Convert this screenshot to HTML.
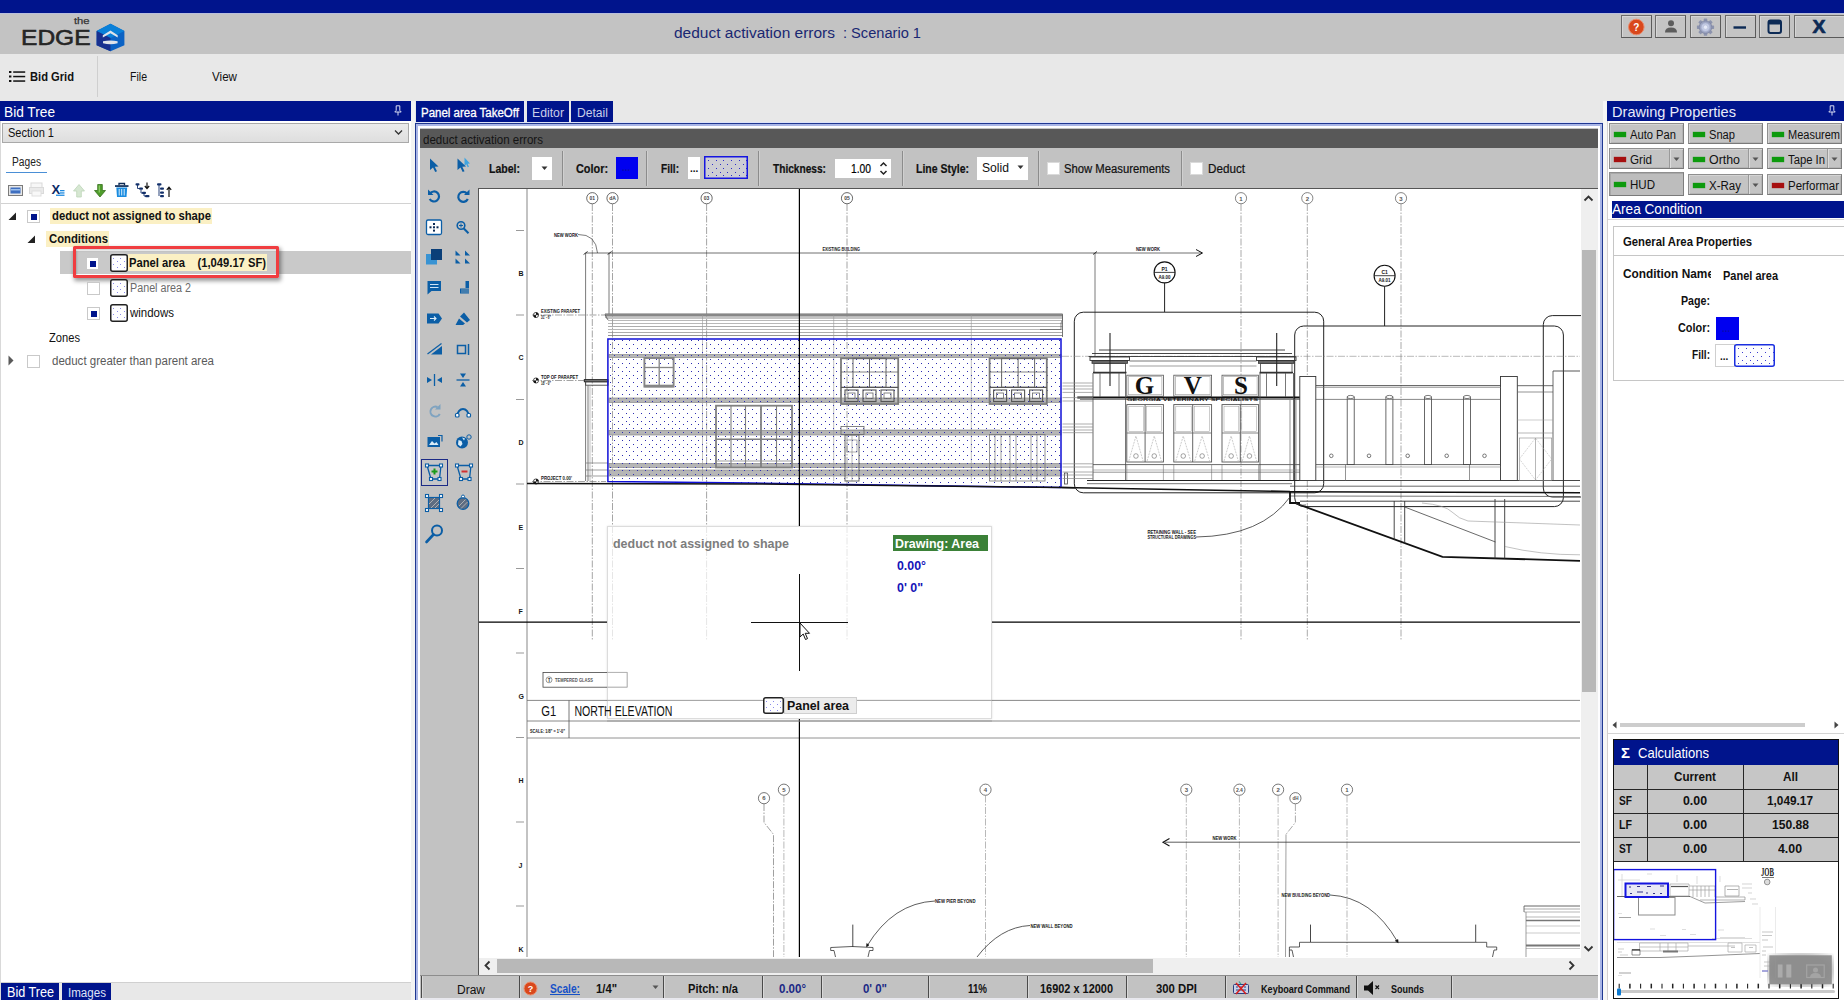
<!DOCTYPE html>
<html>
<head>
<meta charset="utf-8">
<title>deduct activation errors : Scenario 1</title>
<style>
*{box-sizing:border-box;margin:0;padding:0}
html,body{width:1844px;height:1000px;overflow:hidden;background:#e8e8e8;font-family:"Liberation Sans",sans-serif;font-size:12px;color:#111}
.a{position:absolute}
.t{position:absolute;white-space:nowrap;line-height:1}
.b{font-weight:bold}
.navy{background:#00148c}

.wb{top:15px;width:31px;height:23px;border:1px solid #6b6b6b;border-right-color:#5a5a5a;border-bottom-color:#5a5a5a;background:#c4c4c4;box-shadow:inset 1px 1px 0 #d6d6d6}

.cb{width:13px;height:13px;border:1px solid #c9c9c9;background:#fff}
.cb i{position:absolute;left:3px;top:3px;width:6px;height:6px;background:#00148c}
.hl{background:#fbf0c4}
.fi{width:18px;height:18px;border:1.5px solid #222;border-radius:2px;background-color:#fdfdff;background-image:radial-gradient(circle,#8585ee 0.45px,transparent 0.7px),radial-gradient(circle,#8585ee 0.45px,transparent 0.7px);background-size:6px 6px;background-position:0px 0px,3px 3px}

.tl{font-size:12px;color:#111;-webkit-text-stroke:0.2px #111}
.sep{top:151px;width:2px;height:35px;background:#8c8c8c;border-right:1px solid #d0d0d0}
.sd{top:976px;width:1px;height:22px;background:#4a4a4a;box-shadow:1px 0 0 #d8d8d8}
.st{top:983.4px;font-size:12px;color:#111}

.pb{border:1px solid #8f8f8f;border-right-color:#7e7e7e;border-bottom-color:#7a7a7a;background:#c4c4c4;box-shadow:inset 1px 1px 0 #d4d4d4, inset -1px -1px 0 #b4b4b4}
.pp{background:#bdbdbd;box-shadow:inset 1px 1px 0 #a8a8a8}
.gl{background:#262626}
</style>
</head>
<body>
<div id="root" style="position:relative;width:1844px;height:1000px;overflow:hidden;background:#e8e8e8">
<!-- ===== TOP BARS ===== -->
<div class="a navy" style="left:0;top:0;width:1844px;height:13px"></div>
<div class="a" style="left:0;top:13px;width:1844px;height:1px;background:#b9bfdc"></div>
<div class="a" style="left:0;top:14px;width:1844px;height:40px;background:#c3c3c3"></div>
<div class="a" style="left:0;top:54px;width:1844px;height:47px;background:#e8e8e8"></div>

<!-- logo -->
<div class="t" style="transform-origin:0 0;transform:scaleX(1.1957);left:74.2px;top:16.2px;font-size:9.4px;color:#333;-webkit-text-stroke:0.25px #333">the</div>
<div class="t" style="transform-origin:0 0;transform:scaleX(1.1012);left:21px;top:26.8px;font-size:22.3px;color:#262626;-webkit-text-stroke:0.6px #262626">EDGE</div>
<svg class="a" style="left:95px;top:22px" width="31" height="31" viewBox="95 22 31 31">
  <polygon points="110.5,23.8 124.4,30.9 124.4,45.2 110.5,51.2 96.6,45.2 96.6,30.9" fill="#0b62c4"/>
  <polygon points="110.5,23.8 124.4,30.9 110.5,38 96.6,30.9" fill="#0a80d8"/>
  <polygon points="96.6,30.9 110.5,38 110.5,51.2 96.6,45.2" fill="#18308f"/>
  <path d="M102.8 35.3L110.5 30.6 117.7 35.3 117.7 37.6 110.5 33.300 102.800 37.600Z" fill="#dfe3ea"/>
  <path d="M103 41.2Q110.500 39.800 117.600 41.200L117.600 43.300Q110.500 45.200 103 43.300Z" fill="#dfe3ea"/>
  <path d="M104.500 36.800L110.500 38.200V33.400Z" fill="#18308f" opacity=".0"/>
</svg>
<!-- title -->
<div class="t" style="transform-origin:0 0;transform:scaleX(0.9993);left:673.500px;top:25px;font-size:15.5px;color:#1a2872;">deduct activation errors</div><div class="t" style="transform-origin:0 0;transform:scaleX(0.9430);left:842.500px;top:25px;font-size:15.5px;color:#1a2872;">: Scenario 1</div>
<!-- window buttons -->
<div class="a wb" style="left:1621px"></div>
<div class="a wb" style="left:1655px"></div>
<div class="a wb" style="left:1690px"></div>
<div class="a wb" style="left:1725px"></div>
<div class="a wb" style="left:1759px"></div>
<div class="a wb" style="left:1794px;width:52px"></div>
<svg class="a" style="left:1621px;top:15px" width="223" height="24" viewBox="1621 15 223 24">
  <circle cx="1636.3" cy="27" r="7.8" fill="#d9481c"/>
  <circle cx="1636.3" cy="27" r="7.8" fill="none" stroke="#e9896a" stroke-width="1"/>
  <text x="1636.3" y="30.8" font-size="10" font-weight="bold" fill="#fff" text-anchor="middle" font-family="Liberation Sans">?</text>
  <circle cx="1671" cy="23.3" r="3" fill="#5c5c5c"/>
  <path d="M1665 32.5 Q1665 27.5 1671 27.5 Q1677 27.5 1677 32.5 Z" fill="#5c5c5c"/>
  <g transform="translate(1705.5,27.2)"><rect x="-1.700" y="-8.600" width="3.400" height="3.600" rx=".6" transform="rotate(0)" fill="#8c93ad"/><rect x="-1.700" y="-8.600" width="3.400" height="3.600" rx=".6" transform="rotate(45)" fill="#8c93ad"/><rect x="-1.700" y="-8.600" width="3.400" height="3.600" rx=".6" transform="rotate(90)" fill="#8c93ad"/><rect x="-1.700" y="-8.600" width="3.400" height="3.600" rx=".6" transform="rotate(135)" fill="#8c93ad"/><rect x="-1.700" y="-8.600" width="3.400" height="3.600" rx=".6" transform="rotate(180)" fill="#8c93ad"/><rect x="-1.700" y="-8.600" width="3.400" height="3.600" rx=".6" transform="rotate(225)" fill="#8c93ad"/><rect x="-1.700" y="-8.600" width="3.400" height="3.600" rx=".6" transform="rotate(270)" fill="#8c93ad"/><rect x="-1.700" y="-8.600" width="3.400" height="3.600" rx=".6" transform="rotate(315)" fill="#8c93ad"/><circle r="6.300" fill="#9aa2bf" stroke="#7f87a3" stroke-width=".8"/><circle r="4.300" fill="#c3cae3" stroke="#aab2d0" stroke-width=".8"/><circle r="2.200" fill="#e6eaf8" stroke="#b6bdd8" stroke-width=".6"/></g>
  <rect x="1733.5" y="26.3" width="12.5" height="2.4" fill="#0c2a55"/>
  <rect x="1768.5" y="20.5" width="12.5" height="12.5" rx="2" fill="none" stroke="#0c2a55" stroke-width="2"/>
  <rect x="1768.5" y="20.5" width="12.5" height="4" rx="1.5" fill="#0c2a55"/>
  <text x="1819" y="33.2" font-size="18" font-weight="bold" fill="#0c2a55" stroke="#0c2a55" stroke-width=".7" textLength="13" lengthAdjust="spacingAndGlyphs" text-anchor="middle" font-family="Liberation Sans">X</text>
</svg>
<!-- menu -->
<svg class="a" style="left:9px;top:70px" width="17" height="13" viewBox="0 0 17 13">
  <g fill="#111"><rect x="0" y="1" width="2.4" height="2"/><rect x="0" y="5.5" width="2.4" height="2"/><rect x="0" y="10" width="2.4" height="2"/>
  <rect x="4.2" y="1.3" width="12" height="1.5"/><rect x="4.2" y="5.8" width="12" height="1.5"/><rect x="4.2" y="10.3" width="12" height="1.5"/></g>
</svg>
<div class="t b" style="transform-origin:0 0;transform:scaleX(0.9294);left:30px;top:71.4px;font-size:12px;color:#111;">Bid Grid</div>
<div class="a" style="left:97px;top:56px;width:1px;height:41px;background:#cfcfcf"></div>
<div class="t" style="transform-origin:0 0;transform:scaleX(0.8788);left:130px;top:71.4px;font-size:12px;color:#111;">File</div>
<div class="t" style="transform-origin:0 0;transform:scaleX(0.9691);left:212px;top:71.4px;font-size:12px;color:#111;">View</div>
<!--TOPCONTENT-->

<!-- ===== LEFT PANEL ===== -->
<div class="a" id="left" style="left:0;top:101px;width:411px;height:899px;background:#fff"></div>

<div class="a" style="left:0;top:101px;width:1px;height:899px;background:#d9d9d9"></div>
<div class="a navy" style="left:0;top:101px;width:411px;height:20px"></div>
<div class="t" style="transform-origin:0 0;transform:scaleX(0.9128);left:4px;top:104px;font-size:15px;color:#fff;">Bid Tree</div>
<svg class="a" style="left:394px;top:105px" width="8" height="11" viewBox="0 0 8 11"><path d="M2.2 0.8h3.6v4.6l1.4 1.6H0.8l1.4-1.6z" fill="none" stroke="#d7dbf2" stroke-width="1"/><path d="M4 7v3.5" stroke="#d7dbf2" stroke-width="1"/></svg>
<!-- combo -->
<div class="a" style="left:2px;top:123px;width:407px;height:20px;border:1px solid #a9a9a9;background:linear-gradient(#ebebeb,#dedede)"></div>
<div class="t" style="transform-origin:0 0;transform:scaleX(0.9191);left:8px;top:127.4px;font-size:12px;color:#111;">Section 1</div>
<svg class="a" style="left:394px;top:129px" width="9" height="7" viewBox="0 0 9 7"><path d="M1 1.5l3.5 3.5 3.5-3.5" fill="none" stroke="#333" stroke-width="1.3"/></svg>
<!-- pages tab -->
<div class="t" style="transform-origin:0 0;transform:scaleX(0.8522);left:12px;top:156.4px;font-size:12px;color:#222;">Pages</div>
<div class="a" style="left:6px;top:172px;width:41px;height:1px;background:#4a8fd6"></div>
<!-- icons -->
<svg class="a" style="left:6px;top:181px" width="170" height="18" viewBox="6 181 170 18">
  <rect x="8.5" y="185.5" width="14" height="10" fill="#e7e7e7" stroke="#7b7b7b"/><rect x="10.5" y="187.5" width="10" height="6" fill="#3f6fc0"/><rect x="11" y="189" width="9" height="1.5" fill="#9cc0ee"/>
  <g opacity=".55"><rect x="31" y="183" width="11" height="5" fill="#f2f2f2" stroke="#bdbdbd"/><rect x="29.5" y="187.500" width="14" height="6" fill="#d9d9d9" stroke="#bdbdbd"/><rect x="32" y="191" width="9" height="5" fill="#f4f4f4" stroke="#c6c6c6"/></g>
  <text x="51.500" y="194" font-size="13" font-weight="bold" fill="#0c2a66" font-family="Liberation Sans">X</text><rect x="60" y="190" width="4.500" height="1.300" fill="#1f8ae0"/><rect x="60" y="192.300" width="4.500" height="1.300" fill="#1f8ae0"/><rect x="56" y="194.600" width="8.500" height="1.300" fill="#1f8ae0"/>
  <path d="M79 184.500l5.500 6.500h-3.200v6h-4.600v-6H73.500z" fill="#d6e7d2" stroke="#bdd4b8" stroke-width=".8"/>
  <path d="M100 197l-5.500-6.500h3.200v-6h4.600v6h3.200z" fill="#4f9d2b" stroke="#35701c" stroke-width=".8"/><path d="M99.300 185.500v7" stroke="#8fd06a" stroke-width="1.200"/>
  <g fill="#1a8ce0"><path d="M116.300 187.500h10.900l-.7 9.500h-9.500z"/><rect x="115" y="185.200" width="13.500" height="1.700" fill="#0c2a55"/><path d="M119 185.200v-1.700h5.500v1.700" fill="none" stroke="#0c2a55" stroke-width="1.300"/></g><g stroke="#d6ecfb" stroke-width="1"><path d="M119.200 189v6.500M121.700 189v6.500M124.200 189v6.500"/></g>
  <g fill="#12306b"><rect x="135.500" y="183.300" width="4" height="2.200" rx="1"/><rect x="139" y="187.600" width="4" height="2.200" rx="1"/><rect x="142" y="191.800" width="4" height="2.200" rx="1"/><rect x="145" y="195" width="4.500" height="2.200" rx="1"/></g><path d="M137.500 185v3.500h2M141 190v3h2M144 194v2h1.500" fill="none" stroke="#12306b" stroke-width=".9"/><path d="M147 182.500v5.500m-2.200-2l2.200 2.500 2.200-2.500" fill="none" stroke="#111" stroke-width="1.200"/>
  <g fill="#12306b"><rect x="157" y="183.300" width="4.500" height="2.200" rx="1"/><rect x="160" y="187.500" width="4" height="2.200" rx="1"/><rect x="160" y="191.500" width="4" height="2.200" rx="1"/><rect x="160" y="195" width="4" height="2.200" rx="1"/></g><path d="M159 185v11" stroke="#12306b" stroke-width=".9"/><path d="M169 197v-9.500m-2.200 2.300l2.200-2.600 2.200 2.600" fill="none" stroke="#111" stroke-width="1.200"/>
</svg>
<div class="a" style="left:1px;top:203px;width:410px;height:1px;background:#d2d2d2"></div>
<!-- tree -->
<svg class="a" style="left:0;top:205px" width="60" height="170" viewBox="0 205 60 170">
  <path d="M16 212.500v7.500H8.500z" fill="#222"/>
  <path d="M35 235.500v7.500H27.500z" fill="#222"/>
  <path d="M8.500 355.500l5 5-5 5z" fill="#5a5a5a"/>
</svg>
<div class="a cb" style="left:27px;top:210px"><i></i></div>
<div class="a hl" style="left:50px;top:208px;width:162px;height:16px"></div>
<div class="t b" style="transform-origin:0 0;transform:scaleX(0.9388);left:52px;top:210.4px;font-size:12px;">deduct not assigned to shape</div>
<div class="a hl" style="left:46px;top:231px;width:63px;height:16px"></div>
<div class="t b" style="transform-origin:0 0;transform:scaleX(0.9416);left:49px;top:233.4px;font-size:12px;">Conditions</div>
<!-- selected row -->
<div class="a" style="left:60px;top:251px;width:351px;height:23px;background:#c9c9c9"></div>
<div class="a" style="left:73px;top:246.300px;width:205.500px;height:31.700px;border:3.300px solid #f03d40;border-radius:1.500px;box-shadow:1.500px 2.500px 4px rgba(0,0,0,.4), inset 1px 1.500px 2px rgba(0,0,0,.18)"></div>
<div class="a cb" style="left:86px;top:257px"><i></i></div>
<svg class="a" style="left:110px;top:254px" width="18" height="18" viewBox="0 0 18 18"><rect x=".75" y=".75" width="16.5" height="16.5" rx="2" fill="#fefeff" stroke="#222" stroke-width="1.5"/><g fill="#8a8aec"><rect x="3" y="4" width="1" height="1"/><rect x="10" y="4" width="1" height="1"/><rect x="7" y="7" width="1" height="1"/><rect x="14" y="7" width="1" height="1"/><rect x="3" y="10" width="1" height="1"/><rect x="10" y="10" width="1" height="1"/><rect x="7" y="13" width="1" height="1"/><rect x="14" y="13" width="1" height="1"/></g></svg>
<div class="a hl" style="left:128px;top:254px;width:139px;height:17px"></div>
<div class="t b" style="transform-origin:0 0;transform:scaleX(0.9336);left:129px;top:257.4px;font-size:12px;">Panel area&nbsp;&nbsp;&nbsp;&nbsp;(1,049.17 SF)</div>
<div class="a cb" style="left:87px;top:282px"></div>
<svg class="a" style="left:110px;top:279px" width="18" height="18" viewBox="0 0 18 18"><rect x=".75" y=".75" width="16.5" height="16.5" rx="2" fill="#fefeff" stroke="#222" stroke-width="1.5"/><g fill="#8a8aec"><rect x="3" y="4" width="1" height="1"/><rect x="10" y="4" width="1" height="1"/><rect x="7" y="7" width="1" height="1"/><rect x="14" y="7" width="1" height="1"/><rect x="3" y="10" width="1" height="1"/><rect x="10" y="10" width="1" height="1"/><rect x="7" y="13" width="1" height="1"/><rect x="14" y="13" width="1" height="1"/></g></svg>
<div class="t" style="transform-origin:0 0;transform:scaleX(0.8962);left:130px;top:282.4px;font-size:12px;color:#6a6a6a;">Panel area 2</div>
<div class="a cb" style="left:87px;top:307px"><i></i></div>
<svg class="a" style="left:110px;top:304px" width="18" height="18" viewBox="0 0 18 18"><rect x=".75" y=".75" width="16.5" height="16.5" rx="2" fill="#fefeff" stroke="#222" stroke-width="1.5"/><g fill="#8a8aec"><rect x="3" y="4" width="1" height="1"/><rect x="10" y="4" width="1" height="1"/><rect x="7" y="7" width="1" height="1"/><rect x="14" y="7" width="1" height="1"/><rect x="3" y="10" width="1" height="1"/><rect x="10" y="10" width="1" height="1"/><rect x="7" y="13" width="1" height="1"/><rect x="14" y="13" width="1" height="1"/></g></svg>
<div class="t" style="transform-origin:0 0;transform:scaleX(0.9559);left:130px;top:307.4px;font-size:12px;color:#111;">windows</div>
<div class="t" style="transform-origin:0 0;transform:scaleX(0.9293);left:49px;top:332.4px;font-size:12px;color:#111;">Zones</div>
<div class="a cb" style="left:27px;top:355px"></div>
<div class="t" style="transform-origin:0 0;transform:scaleX(0.9597);left:52px;top:355.4px;font-size:12px;color:#5a5a5a;">deduct greater than parent area</div>
<!-- bottom tabs -->
<div class="a" style="left:1px;top:983px;width:410px;height:17px;background:#e8e8e8"></div>
<div class="a" style="left:1px;top:982px;width:410px;height:1px;background:#d0d0d0"></div>
<div class="a navy" style="left:1px;top:983px;width:58px;height:17px"></div>
<div class="t" style="transform-origin:0 0;transform:scaleX(0.8704);left:7px;top:985px;font-size:14.5px;color:#fff;">Bid Tree</div>
<div class="a navy" style="left:61.500px;top:983px;width:49px;height:17px"></div>
<div class="t" style="transform-origin:0 0;transform:scaleX(0.9655);left:67.500px;top:987.4px;font-size:12px;color:#dfe3f7;">Images</div>
<!--LEFTCONTENT-->

<!-- ===== CENTER PANEL ===== -->

<!-- splitter -->
<div class="a" style="left:411px;top:101px;width:4px;height:899px;background:#f3f3f3"></div>
<!-- tabs -->
<div class="a navy" style="left:416px;top:101px;width:108px;height:20.500px"></div>
<div class="a" style="left:524px;top:101px;width:1px;height:20px;background:#e6e9f8"></div>
<div class="a navy" style="left:527px;top:101px;width:42px;height:20.500px"></div>
<div class="a navy" style="left:571px;top:101px;width:42px;height:20.500px"></div><div class="a" style="left:415px;top:121.500px;width:1188px;height:1.500px;background:#dfe3f6"></div>
<div class="t" style="transform-origin:0 0;transform:scaleX(0.9580);left:421px;top:106.9px;font-size:12px;color:#fff;-webkit-text-stroke:0.3px #fff">Panel area TakeOff</div>
<div class="t" style="transform-origin:0 0;transform:scaleX(1.0204);left:532px;top:106.9px;font-size:12px;color:#c9cee9;">Editor</div>
<div class="t" style="transform-origin:0 0;transform:scaleX(1.0102);left:577px;top:106.9px;font-size:12px;color:#c9cee9;">Detail</div>
<!-- frame -->
<div class="a" style="left:415px;top:123px;width:1188px;height:880px;border:1px solid #1f3791;background:#fdfdff;box-shadow:0.800px 0 0 #1f3791"></div>
<div class="a" style="left:416px;top:124px;width:1186px;height:880px;border:2px solid #a9b5e6;border-bottom:0"></div>
<!-- gray body -->
<div class="a" style="left:420px;top:128px;width:1178px;height:872px;background:#c2c2c2"></div>
<div class="a" style="left:420px;top:998px;width:1178px;height:2px;background:#e8e8ee"></div>
<!-- dark caption -->
<div class="a" style="left:420px;top:129px;width:1178px;height:19px;background:#585858"></div>
<div class="t" style="transform-origin:0 0;transform:scaleX(0.9620);left:423px;top:133.7px;font-size:12px;color:#141414;">deduct activation errors</div>
<!-- canvas border + white -->
<div class="a" style="left:478px;top:188px;width:1120px;height:787px;background:#efefef;border-left:1px solid #555;border-top:1px solid #555"></div>
<div class="a" id="canvas" style="left:479px;top:189px;width:1102px;height:769px;background:#fff;overflow:hidden">
<svg class="a" style="left:0;top:0" width="1102" height="769" viewBox="479 189 1102 769" fill="none">
<defs><pattern id="dots" width="23" height="23" patternUnits="userSpaceOnUse" x="614" y="340"><g fill="#2c2cb2"><rect x="0" y="0" width="1" height="1"/><rect x="8" y="0" width="1" height="1"/><rect x="15" y="0" width="1" height="1"/><rect x="4" y="4" width="1" height="1"/><rect x="12" y="4" width="1" height="1"/><rect x="19" y="4" width="1" height="1"/><rect x="0" y="8" width="1" height="1"/><rect x="8" y="8" width="1" height="1"/><rect x="15" y="8" width="1" height="1"/><rect x="4" y="12" width="1" height="1"/><rect x="12" y="12" width="1" height="1"/><rect x="19" y="12" width="1" height="1"/><rect x="0" y="15" width="1" height="1"/><rect x="8" y="15" width="1" height="1"/><rect x="15" y="15" width="1" height="1"/><rect x="4" y="19" width="1" height="1"/><rect x="12" y="19" width="1" height="1"/><rect x="19" y="19" width="1" height="1"/></g></pattern></defs>
<path d="M527 189L527 957" stroke="#555" stroke-width="0.7" />
<text x="518.5" y="276" font-size="7" fill="#161616" text-anchor="start" font-family="Liberation Sans" font-weight="bold" stroke="none" >B</text>
<text x="518.5" y="360" font-size="7" fill="#161616" text-anchor="start" font-family="Liberation Sans" font-weight="bold" stroke="none" >C</text>
<text x="518.5" y="445" font-size="7" fill="#161616" text-anchor="start" font-family="Liberation Sans" font-weight="bold" stroke="none" >D</text>
<text x="518.5" y="530" font-size="7" fill="#161616" text-anchor="start" font-family="Liberation Sans" font-weight="bold" stroke="none" >E</text>
<text x="518.5" y="614" font-size="7" fill="#161616" text-anchor="start" font-family="Liberation Sans" font-weight="bold" stroke="none" >F</text>
<text x="518.5" y="699" font-size="7" fill="#161616" text-anchor="start" font-family="Liberation Sans" font-weight="bold" stroke="none" >G</text>
<text x="518.5" y="783" font-size="7" fill="#161616" text-anchor="start" font-family="Liberation Sans" font-weight="bold" stroke="none" >H</text>
<text x="518.5" y="868" font-size="7" fill="#161616" text-anchor="start" font-family="Liberation Sans" font-weight="bold" stroke="none" >J</text>
<text x="518.5" y="952" font-size="7" fill="#161616" text-anchor="start" font-family="Liberation Sans" font-weight="bold" stroke="none" >K</text>
<path d="M516 230.5L524 230.5" stroke="#555" stroke-width="0.6" />
<path d="M516 315L524 315" stroke="#555" stroke-width="0.6" />
<path d="M516 399.5L524 399.5" stroke="#555" stroke-width="0.6" />
<path d="M516 484L524 484" stroke="#555" stroke-width="0.6" />
<path d="M516 568.5L524 568.5" stroke="#555" stroke-width="0.6" />
<path d="M516 653L524 653" stroke="#555" stroke-width="0.6" />
<path d="M516 737.5L524 737.5" stroke="#555" stroke-width="0.6" />
<path d="M516 822L524 822" stroke="#555" stroke-width="0.6" />
<path d="M516 906L524 906" stroke="#555" stroke-width="0.6" />
<circle cx="592.3" cy="198.2" r="5.6" stroke="#444" stroke-width="0.8" fill="none"/>
<text x="592.3" y="200.3" font-size="5" fill="#444" text-anchor="middle" font-family="Liberation Sans" font-weight="bold" stroke="none" >01</text>
<path d="M592.3 204L592.3 640" stroke="#747474" stroke-width="0.65" stroke-dasharray="7 1.5 1.5 1.5"/>
<circle cx="612.5" cy="198.2" r="5.6" stroke="#444" stroke-width="0.8" fill="none"/>
<text x="612.5" y="200.3" font-size="5" fill="#444" text-anchor="middle" font-family="Liberation Sans" font-weight="bold" stroke="none" >dA</text>
<path d="M612.5 204L612.5 640" stroke="#747474" stroke-width="0.65" stroke-dasharray="7 1.5 1.5 1.5"/>
<circle cx="706.6" cy="198.2" r="5.6" stroke="#444" stroke-width="0.8" fill="none"/>
<text x="706.6" y="200.3" font-size="5" fill="#444" text-anchor="middle" font-family="Liberation Sans" font-weight="bold" stroke="none" >03</text>
<path d="M706.6 204L706.6 640" stroke="#747474" stroke-width="0.65" stroke-dasharray="7 1.5 1.5 1.5"/>
<circle cx="847" cy="198.2" r="5.6" stroke="#444" stroke-width="0.8" fill="none"/>
<text x="847" y="200.3" font-size="5" fill="#444" text-anchor="middle" font-family="Liberation Sans" font-weight="bold" stroke="none" >05</text>
<path d="M847 204L847 640" stroke="#747474" stroke-width="0.65" stroke-dasharray="7 1.5 1.5 1.5"/>
<circle cx="1241" cy="198.2" r="5.6" stroke="#666" stroke-width="0.8" fill="none"/>
<text x="1241" y="200.5" font-size="6" fill="#555" text-anchor="middle" font-family="Liberation Sans" font-weight="bold" stroke="none" >1</text>
<path d="M1241 204L1241 640" stroke="#7c7c7c" stroke-width="0.65" stroke-dasharray="7 1.5 1.5 1.5"/>
<circle cx="1307.3" cy="198.2" r="5.6" stroke="#666" stroke-width="0.8" fill="none"/>
<text x="1307.3" y="200.5" font-size="6" fill="#555" text-anchor="middle" font-family="Liberation Sans" font-weight="bold" stroke="none" >2</text>
<path d="M1307.3 204L1307.3 640" stroke="#7c7c7c" stroke-width="0.65" stroke-dasharray="7 1.5 1.5 1.5"/>
<circle cx="1401" cy="198.2" r="5.6" stroke="#666" stroke-width="0.8" fill="none"/>
<text x="1401" y="200.5" font-size="6" fill="#555" text-anchor="middle" font-family="Liberation Sans" font-weight="bold" stroke="none" >3</text>
<path d="M1401 204L1401 640" stroke="#7c7c7c" stroke-width="0.65" stroke-dasharray="7 1.5 1.5 1.5"/>
<text x="554" y="236.5" font-size="5.5" fill="#161616" text-anchor="start" font-family="Liberation Sans" font-weight="bold" stroke="none" textLength="24" lengthAdjust="spacingAndGlyphs" >NEW WORK</text>
<path d="M578 234.5 Q596 234 597.5 253" stroke="#444" stroke-width="0.7" fill="none" />
<path d="M585.6 253L1202 253" stroke="#222" stroke-width="0.65" />
<path d="M1196 249.5l6.5 3.5-6.5 3.5" stroke="#111" stroke-width="1" fill="none" />
<path d="M583.600 254.500l4-3M607.600 254.500l4-3M1093 254.500l4-3" stroke="#222" stroke-width="0.9" fill="none" />
<text x="822.5" y="251" font-size="5.5" fill="#161616" text-anchor="start" font-family="Liberation Sans" font-weight="bold" stroke="none" textLength="37.5" lengthAdjust="spacingAndGlyphs" >EXISTING BUILDING</text>
<text x="1136" y="251" font-size="5.5" fill="#161616" text-anchor="start" font-family="Liberation Sans" font-weight="bold" stroke="none" textLength="24" lengthAdjust="spacingAndGlyphs" >NEW WORK</text>
<path d="M585.6 253L585.6 481" stroke="#333" stroke-width="0.65" />
<path d="M609 253L609 315" stroke="#333" stroke-width="0.65" />
<path d="M1095 253L1095 356" stroke="#333" stroke-width="0.65" />
<circle cx="536" cy="315" r="2.6" stroke="#111" stroke-width="0.7" fill="none"/>
<path d="M536 315h2.6a2.6 2.6 0 0 0-2.6-2.6zM536 315h-2.6a2.6 2.6 0 0 0 2.6 2.6z" stroke="#111" stroke-width="0" fill="#111" />
<path d="M532 315L606 315" stroke="#666" stroke-width="0.6" stroke-dasharray="7 1.5 1.5 1.5"/>
<text x="541" y="313" font-size="5.5" fill="#161616" text-anchor="start" font-family="Liberation Sans" font-weight="bold" stroke="none" textLength="39" lengthAdjust="spacingAndGlyphs" >EXISTING PARAPET</text>
<text x="541" y="319" font-size="5" fill="#161616" text-anchor="start" font-family="Liberation Sans" font-weight="bold" stroke="none" textLength="10" lengthAdjust="spacingAndGlyphs" >31' - 6"</text>
<circle cx="536" cy="380.5" r="2.6" stroke="#111" stroke-width="0.7" fill="none"/>
<path d="M536 380.5h2.6a2.6 2.6 0 0 0-2.6-2.6zM536 380.5h-2.6a2.6 2.6 0 0 0 2.6 2.6z" stroke="#111" stroke-width="0" fill="#111" />
<path d="M532 380.5L606 380.5" stroke="#666" stroke-width="0.6" stroke-dasharray="7 1.5 1.5 1.5"/>
<text x="541" y="378.5" font-size="5.5" fill="#161616" text-anchor="start" font-family="Liberation Sans" font-weight="bold" stroke="none" textLength="37" lengthAdjust="spacingAndGlyphs" >TOP OF PARAPET</text>
<text x="541" y="384.5" font-size="5" fill="#161616" text-anchor="start" font-family="Liberation Sans" font-weight="bold" stroke="none" textLength="10" lengthAdjust="spacingAndGlyphs" >18' - 0"</text>
<circle cx="536" cy="481.5" r="2.6" stroke="#111" stroke-width="0.7" fill="none"/>
<path d="M536 481.5h2.6a2.6 2.6 0 0 0-2.6-2.6zM536 481.5h-2.6a2.6 2.6 0 0 0 2.6 2.6z" stroke="#111" stroke-width="0" fill="#111" />
<path d="M532 481.5L606 481.5" stroke="#666" stroke-width="0.6" stroke-dasharray="7 1.5 1.5 1.5"/>
<text x="541" y="479.5" font-size="5.5" fill="#161616" text-anchor="start" font-family="Liberation Sans" font-weight="bold" stroke="none" textLength="31" lengthAdjust="spacingAndGlyphs" >PROJECT 0.00'</text>
<path d="M605 314.5L1062.5 314.5" stroke="#555" stroke-width="1.6" />
<path d="M605 317.5L1062.5 317.5" stroke="#888" stroke-width="0.7" />
<path d="M608 320.5L1062.5 320.5" stroke="#999" stroke-width="0.7" />
<path d="M608 323.5L1062.5 323.5" stroke="#999" stroke-width="0.7" />
<path d="M608 326.5L1062.5 326.5" stroke="#888" stroke-width="0.7" />
<path d="M608 329.5L1062.5 329.5" stroke="#999" stroke-width="0.7" />
<path d="M608 332.5L1062.5 332.5" stroke="#888" stroke-width="0.7" />
<path d="M608 335.5L1062.5 335.5" stroke="#777" stroke-width="0.8" />
<rect x="605" y="313.6" width="457.5" height="3" rx="0" stroke="none" stroke-width="0" fill="#878787" />
<rect x="606" y="316.6" width="456.5" height="2.4" rx="0" stroke="none" stroke-width="0" fill="#c4c4c4" />
<path d="M605 314.5L608 320" stroke="#555" stroke-width="0.8" />
<path d="M1062.5 314.5L1062.5 337" stroke="#555" stroke-width="0.8" />
<rect x="609" y="354.5" width="452" height="3.0" rx="0" stroke="#8c8c8c" stroke-width="0.7" fill="#b6b6b6" />
<rect x="609" y="398" width="452" height="4.5" rx="0" stroke="#8c8c8c" stroke-width="0.7" fill="#b6b6b6" />
<rect x="609" y="430.5" width="452" height="4.5" rx="0" stroke="#8c8c8c" stroke-width="0.7" fill="#b6b6b6" />
<rect x="609" y="463.5" width="452" height="4.0" rx="0" stroke="#8c8c8c" stroke-width="0.7" fill="#b6b6b6" />
<rect x="609" y="470" width="452" height="6" rx="0" stroke="#8c8c8c" stroke-width="0.7" fill="#b6b6b6" />
<path d="M702.5 315L702.5 481" stroke="#999" stroke-width="0.6" />
<path d="M833.7 315L833.7 481" stroke="#999" stroke-width="0.6" />
<path d="M971.3 315L971.3 481" stroke="#999" stroke-width="0.6" />
<path d="M608.5 339H1061V487.5L608.500 481.500Z" fill="url(#dots)" stroke="none"/>
<rect x="644.4" y="358" width="29.2" height="28.6" rx="0" stroke="#868686" stroke-width="1.9" fill="none" />
<path d="M659.2 358L659.2 386" stroke="#868686" stroke-width="1.3" />
<path d="M644.5 367.5L673.5 367.5" stroke="#868686" stroke-width="1.3" />
<path d="M644.4 386L673.6 386" stroke="#868686" stroke-width="2.6" />
<rect x="716" y="405.7" width="76" height="61.8" rx="0" stroke="#808080" stroke-width="1.8" fill="none" />
<path d="M731 406L731 467" stroke="#808080" stroke-width="1.1" />
<path d="M745.5 406L745.5 467" stroke="#808080" stroke-width="1.1" />
<path d="M761 406L761 467" stroke="#808080" stroke-width="1.8" />
<path d="M776.5 406L776.5 467" stroke="#808080" stroke-width="1.1" />
<path d="M716 439.3L792 439.3" stroke="#808080" stroke-width="1.4" />
<path d="M716 461L792 461" stroke="#888" stroke-width="0.8" />
<rect x="841" y="358.3" width="57.2" height="45.7" rx="0" stroke="#7a7a7a" stroke-width="1.8" fill="none" />
<rect x="853" y="358.3" width="33" height="29" rx="0" stroke="#666" stroke-width="1" fill="none" />
<path d="M869.5 358.3L869.5 387.4" stroke="#666" stroke-width="1" />
<path d="M841 372L898 372" stroke="#666" stroke-width="0.8" />
<path d="M841 387.4L898.2 387.4" stroke="#555" stroke-width="1.4" />
<rect x="845" y="390" width="13" height="11.5" rx="0" stroke="#555" stroke-width="1.1" fill="none" />
<rect x="848" y="393" width="7" height="5.5" rx="0" stroke="#666" stroke-width="0.8" fill="none" />
<rect x="863" y="390" width="13" height="11.5" rx="0" stroke="#555" stroke-width="1.1" fill="none" />
<rect x="866" y="393" width="7" height="5.5" rx="0" stroke="#666" stroke-width="0.8" fill="none" />
<rect x="881" y="390" width="13" height="11.5" rx="0" stroke="#555" stroke-width="1.1" fill="none" />
<rect x="884" y="393" width="7" height="5.5" rx="0" stroke="#666" stroke-width="0.8" fill="none" />
<rect x="989.6" y="358.3" width="57.2" height="45.7" rx="0" stroke="#7a7a7a" stroke-width="1.8" fill="none" />
<rect x="1001.6" y="358.3" width="33" height="29" rx="0" stroke="#666" stroke-width="1" fill="none" />
<path d="M1018.1 358.3L1018.1 387.4" stroke="#666" stroke-width="1" />
<path d="M989.6 372L1046.6 372" stroke="#666" stroke-width="0.8" />
<path d="M989.6 387.4L1046.8 387.4" stroke="#555" stroke-width="1.4" />
<rect x="993.6" y="390" width="13" height="11.5" rx="0" stroke="#555" stroke-width="1.1" fill="none" />
<rect x="996.6" y="393" width="7" height="5.5" rx="0" stroke="#666" stroke-width="0.8" fill="none" />
<rect x="1011.6" y="390" width="13" height="11.5" rx="0" stroke="#555" stroke-width="1.1" fill="none" />
<rect x="1014.6" y="393" width="7" height="5.5" rx="0" stroke="#666" stroke-width="0.8" fill="none" />
<rect x="1029.6" y="390" width="13" height="11.5" rx="0" stroke="#555" stroke-width="1.1" fill="none" />
<rect x="1032.6" y="393" width="7" height="5.5" rx="0" stroke="#666" stroke-width="0.8" fill="none" />
<rect x="841" y="426.5" width="23" height="8" rx="0" stroke="#666" stroke-width="0.8" fill="none" />
<rect x="845" y="435" width="14" height="46" rx="0" stroke="#666" stroke-width="1" fill="none" />
<path d="M852 435L852 481" stroke="#888" stroke-width="0.6" />
<rect x="847" y="440" width="10" height="12" rx="0" stroke="#777" stroke-width="0.6" fill="none" />
<path d="M841 430L1000 430" stroke="#777" stroke-width="0.6" />
<rect x="989.6" y="434.5" width="55.4" height="46.5" rx="0" stroke="#777" stroke-width="0.8" fill="none" />
<path d="M995 435L995 481" stroke="#777" stroke-width="0.7" />
<path d="M1001 435L1001 481" stroke="#777" stroke-width="0.7" />
<path d="M1010 435L1010 481" stroke="#777" stroke-width="0.7" />
<path d="M1016 435L1016 481" stroke="#777" stroke-width="0.7" />
<path d="M1031 435L1031 481" stroke="#777" stroke-width="0.7" />
<path d="M1037 435L1037 481" stroke="#777" stroke-width="0.7" />
<rect x="584.3" y="379.6" width="23.7" height="2.2" rx="0" stroke="#222" stroke-width="0.9" fill="#777" />
<rect x="585.6" y="381.8" width="22.4" height="3.4" rx="0" stroke="#444" stroke-width="0.9" fill="none" />
<path d="M588 385.5L588 481" stroke="#555" stroke-width="0.8" />
<path d="M590 385.5L590 481" stroke="#999" stroke-width="0.6" />
<path d="M586 463L608 463" stroke="#777" stroke-width="0.7" />
<path d="M586 470L608 470" stroke="#777" stroke-width="0.7" />
<path d="M586 476L608 476" stroke="#777" stroke-width="0.7" />
<path d="M607.900 339H1061V487.5L750 483 607.900 481.500Z" stroke="#1010d8" stroke-width="1.5" fill="none" />
<rect x="1064.5" y="473" width="3" height="11" rx="0" stroke="#444" stroke-width="0.8" fill="none" />
<path d="M527 483.5L760 484 1062 487.5 1290 491.500" stroke="#111" stroke-width="1.6" fill="none" />
<rect x="1074.3" y="312.2" width="249.4" height="180.6" rx="9" stroke="#222" stroke-width="1" fill="none" />
<rect x="1294.7" y="326" width="268.7" height="180.6" rx="9" stroke="#222" stroke-width="1" fill="none" />
<rect x="1543.3" y="315.6" width="60" height="181.4" rx="9" stroke="#222" stroke-width="1" fill="none" />
<circle cx="1164.6" cy="272.4" r="10.5" stroke="#111" stroke-width="1.1" fill="none"/>
<path d="M1154.2 272.4L1175 272.4" stroke="#111" stroke-width="0.8" />
<path d="M1164.6 283L1164.6 312" stroke="#222" stroke-width="1" />
<text x="1164.6" y="270.5" font-size="5" fill="#161616" text-anchor="middle" font-family="Liberation Sans" font-weight="bold" stroke="none" >P1</text>
<text x="1164.6" y="279" font-size="5" fill="#161616" text-anchor="middle" font-family="Liberation Sans" font-weight="bold" stroke="none" textLength="12" lengthAdjust="spacingAndGlyphs" >A9.00</text>
<circle cx="1384.6" cy="275.7" r="10.5" stroke="#111" stroke-width="1.1" fill="none"/>
<path d="M1374.2 275.7L1395 275.7" stroke="#111" stroke-width="0.8" />
<path d="M1384.6 286.3L1384.6 326" stroke="#222" stroke-width="1" />
<text x="1384.6" y="273.8" font-size="5" fill="#161616" text-anchor="middle" font-family="Liberation Sans" font-weight="bold" stroke="none" >C1</text>
<text x="1384.6" y="282.3" font-size="5" fill="#161616" text-anchor="middle" font-family="Liberation Sans" font-weight="bold" stroke="none" textLength="12" lengthAdjust="spacingAndGlyphs" >A9.01</text>
<path d="M1062 356.3L1580 356.3" stroke="#8a8a8a" stroke-width="0.6" stroke-dasharray="7 1.5 1.5 1.5"/>
<path d="M1099 350H1285M1092 353.500H1292M1088.600 356.500H1295.600" stroke="#333" stroke-width="0.9" fill="none" />
<rect x="1090" y="357" width="39.5" height="3.5" rx="0" stroke="#333" stroke-width="0.9" fill="none" />
<rect x="1092" y="360.5" width="35.5" height="3" rx="0" stroke="#333" stroke-width="0.8" fill="none" />
<rect x="1094" y="363.5" width="31.5" height="9.5" rx="0" stroke="#444" stroke-width="0.8" fill="none" />
<rect x="1256.5" y="357" width="39.5" height="3.5" rx="0" stroke="#333" stroke-width="0.9" fill="none" />
<rect x="1258.5" y="360.5" width="35.5" height="3" rx="0" stroke="#333" stroke-width="0.8" fill="none" />
<rect x="1260.5" y="363.5" width="31.5" height="9.5" rx="0" stroke="#444" stroke-width="0.8" fill="none" />
<path d="M1110 333L1110 386" stroke="#222" stroke-width="1.1" />
<path d="M1276.7 333L1276.7 386" stroke="#222" stroke-width="1.1" />
<path d="M1129.5 361L1256.5 361" stroke="#555" stroke-width="0.8" />
<path d="M1129.5 366L1256.5 366" stroke="#777" stroke-width="0.7" />
<rect x="1126.8" y="375.2" width="36.600000000000136" height="21" rx="0" stroke="#555" stroke-width="0.8" fill="none" />
<text x="1144.5" y="394.3" font-size="25" fill="#111" text-anchor="middle" font-family="Liberation Serif" font-weight="bold" stroke="none" >G</text>
<rect x="1126.8" y="404.6" width="36.600000000000136" height="57.4" rx="0" stroke="#555" stroke-width="0.9" fill="none" />
<path d="M1145.1 404.6L1145.1 462" stroke="#555" stroke-width="0.9" />
<path d="M1126.8 433L1163.4 433" stroke="#666" stroke-width="0.8" />
<rect x="1128.8" y="406.5" width="14.800000000000068" height="25" rx="0" stroke="#999" stroke-width="0.5" fill="none" />
<rect x="1146.6" y="406.5" width="14.800000000000068" height="25" rx="0" stroke="#999" stroke-width="0.5" fill="none" />
<path d="M1128.8 461L1135.95 436L1143.1 461" stroke="#999" stroke-width="0.5" fill="none" stroke-dasharray="2 1"/>
<circle cx="1135.95" cy="456" r="2.3" stroke="#666" stroke-width="0.6" fill="none"/>
<path d="M1147.1 461L1154.25 436L1161.4 461" stroke="#999" stroke-width="0.5" fill="none" stroke-dasharray="2 1"/>
<circle cx="1154.25" cy="456" r="2.3" stroke="#666" stroke-width="0.6" fill="none"/>
<rect x="1173.8" y="375.2" width="37.799999999999955" height="21" rx="0" stroke="#555" stroke-width="0.8" fill="none" />
<text x="1192.7" y="394.3" font-size="25" fill="#111" text-anchor="middle" font-family="Liberation Serif" font-weight="bold" stroke="none" >V</text>
<rect x="1173.8" y="404.6" width="37.799999999999955" height="57.4" rx="0" stroke="#555" stroke-width="0.9" fill="none" />
<path d="M1192.6999999999998 404.6L1192.6999999999998 462" stroke="#555" stroke-width="0.9" />
<path d="M1173.8 433L1211.6 433" stroke="#666" stroke-width="0.8" />
<rect x="1175.8" y="406.5" width="15.399999999999977" height="25" rx="0" stroke="#999" stroke-width="0.5" fill="none" />
<rect x="1194.1999999999998" y="406.5" width="15.399999999999977" height="25" rx="0" stroke="#999" stroke-width="0.5" fill="none" />
<path d="M1175.8 461L1183.25 436L1190.6999999999998 461" stroke="#999" stroke-width="0.5" fill="none" stroke-dasharray="2 1"/>
<circle cx="1183.25" cy="456" r="2.3" stroke="#666" stroke-width="0.6" fill="none"/>
<path d="M1194.6999999999998 461L1202.1499999999999 436L1209.6 461" stroke="#999" stroke-width="0.5" fill="none" stroke-dasharray="2 1"/>
<circle cx="1202.1499999999999" cy="456" r="2.3" stroke="#666" stroke-width="0.6" fill="none"/>
<rect x="1222" y="375.2" width="36.59999999999991" height="21" rx="0" stroke="#555" stroke-width="0.8" fill="none" />
<text x="1241" y="394.3" font-size="25" fill="#111" text-anchor="middle" font-family="Liberation Serif" font-weight="bold" stroke="none" >S</text>
<rect x="1222" y="404.6" width="36.59999999999991" height="57.4" rx="0" stroke="#555" stroke-width="0.9" fill="none" />
<path d="M1240.3 404.6L1240.3 462" stroke="#555" stroke-width="0.9" />
<path d="M1222 433L1258.6 433" stroke="#666" stroke-width="0.8" />
<rect x="1224" y="406.5" width="14.799999999999955" height="25" rx="0" stroke="#999" stroke-width="0.5" fill="none" />
<rect x="1241.8" y="406.5" width="14.799999999999955" height="25" rx="0" stroke="#999" stroke-width="0.5" fill="none" />
<path d="M1224.0 461L1231.15 436L1238.3 461" stroke="#999" stroke-width="0.5" fill="none" stroke-dasharray="2 1"/>
<circle cx="1231.15" cy="456" r="2.3" stroke="#666" stroke-width="0.6" fill="none"/>
<path d="M1242.3 461L1249.4499999999998 436L1256.6 461" stroke="#999" stroke-width="0.5" fill="none" stroke-dasharray="2 1"/>
<circle cx="1249.4499999999998" cy="456" r="2.3" stroke="#666" stroke-width="0.6" fill="none"/>
<path d="M1077.3 397.5H1306" stroke="#111" stroke-width="1.8" fill="none" />
<path d="M1080 399.5L1303 399.5" stroke="#555" stroke-width="0.7" />
<text x="1127" y="401.3" font-size="3.8" fill="#161616" text-anchor="start" font-family="Liberation Sans" font-weight="bold" stroke="none" textLength="131" lengthAdjust="spacingAndGlyphs" >GEORGIA VETERINARY SPECIALISTS</text>
<path d="M1093 373L1093 480" stroke="#444" stroke-width="0.8" />
<path d="M1125.6 373L1125.6 480" stroke="#444" stroke-width="0.8" />
<path d="M1260 373L1260 480" stroke="#444" stroke-width="0.8" />
<path d="M1293.5 373L1293.5 480" stroke="#444" stroke-width="0.8" />
<path d="M1093 464.6L1300 464.6" stroke="#444" stroke-width="0.8" />
<path d="M1088 480.5L1580 480.5" stroke="#333" stroke-width="0.9" />
<path d="M1093 470L1300 470" stroke="#888" stroke-width="0.6" />
<path d="M1126.8 464.6L1126.8 480.5" stroke="#777" stroke-width="0.6" />
<path d="M1163.4 464.6L1163.4 480.5" stroke="#777" stroke-width="0.6" />
<path d="M1173.8 464.6L1173.8 480.5" stroke="#777" stroke-width="0.6" />
<path d="M1211.6 464.6L1211.6 480.5" stroke="#777" stroke-width="0.6" />
<path d="M1222 464.6L1222 480.5" stroke="#777" stroke-width="0.6" />
<path d="M1258.6 464.6L1258.6 480.5" stroke="#777" stroke-width="0.6" />
<path d="M1290 400L1290 480" stroke="#666" stroke-width="0.7" />
<path d="M1296 400L1296 480" stroke="#666" stroke-width="0.7" />
<path d="M1062.5 383L1093 383" stroke="#8a8a8a" stroke-width="0.7" />
<path d="M1062.5 386L1093 386" stroke="#8a8a8a" stroke-width="0.7" />
<path d="M1062.5 389L1093 389" stroke="#8a8a8a" stroke-width="0.7" />
<path d="M1062.5 392.4L1093 392.4" stroke="#8a8a8a" stroke-width="0.7" />
<path d="M1062.5 397.6L1093 397.6" stroke="#8a8a8a" stroke-width="0.7" />
<path d="M1062.5 401L1093 401" stroke="#8a8a8a" stroke-width="0.7" />
<path d="M1062.5 424L1093 424" stroke="#8a8a8a" stroke-width="0.7" />
<path d="M1062.5 427L1093 427" stroke="#8a8a8a" stroke-width="0.7" />
<path d="M1062.5 430L1093 430" stroke="#8a8a8a" stroke-width="0.7" />
<path d="M1062.5 432.7L1093 432.7" stroke="#8a8a8a" stroke-width="0.7" />
<path d="M1062.5 463.8L1093 463.8" stroke="#8a8a8a" stroke-width="0.7" />
<path d="M1062.5 467L1093 467" stroke="#8a8a8a" stroke-width="0.7" />
<path d="M1062.5 472L1093 472" stroke="#8a8a8a" stroke-width="0.7" />
<path d="M1062.5 475L1093 475" stroke="#8a8a8a" stroke-width="0.7" />
<path d="M1062.5 478.5L1093 478.5" stroke="#8a8a8a" stroke-width="0.7" />
<path d="M1092 362L1127.5 362" stroke="#333" stroke-width="1.3" />
<path d="M1093 372.5L1126.5 372.5" stroke="#333" stroke-width="1.3" />
<path d="M1100 373L1100 397" stroke="#555" stroke-width="0.8" />
<path d="M1119 373L1119 397" stroke="#555" stroke-width="0.8" />
<path d="M1258.5 362L1294.0 362" stroke="#333" stroke-width="1.3" />
<path d="M1259.5 372.5L1293.0 372.5" stroke="#333" stroke-width="1.3" />
<path d="M1266.5 373L1266.5 397" stroke="#555" stroke-width="0.8" />
<path d="M1285.5 373L1285.5 397" stroke="#555" stroke-width="0.8" />
<rect x="1128.3" y="376.7" width="33.600000000000136" height="18" rx="0" stroke="#999" stroke-width="0.6" fill="none" />
<rect x="1175.3" y="376.7" width="34.799999999999955" height="18" rx="0" stroke="#999" stroke-width="0.6" fill="none" />
<rect x="1223.5" y="376.7" width="33.59999999999991" height="18" rx="0" stroke="#999" stroke-width="0.6" fill="none" />
<path d="M1087 480.5L1300 480.5" stroke="#222" stroke-width="1.2" />
<path d="M1087 483.7L1292 483.7" stroke="#555" stroke-width="0.8" />
<path d="M1093 472.2L1300 472.2" stroke="#666" stroke-width="0.7" />
<path d="M1062.500 314.500V320L1061 323V329.500H1040" stroke="#666" stroke-width="0.8" fill="none" />
<rect x="1299.8" y="376.5" width="16" height="104" rx="0" stroke="#333" stroke-width="0.9" fill="#fff" />
<rect x="1500.5" y="376.5" width="16.8" height="104" rx="0" stroke="#333" stroke-width="0.9" fill="#fff" />
<path d="M1316 385.7L1500.5 385.7" stroke="#333" stroke-width="0.9" />
<path d="M1316 387.5L1500.5 387.5" stroke="#777" stroke-width="0.6" />
<rect x="1347.2" y="397" width="7" height="67.6" rx="0" stroke="#444" stroke-width="0.8" fill="#fff" />
<ellipse cx="1350.7" cy="397" rx="3.5" ry="1.6" fill="#fff" stroke="#444" stroke-width="0.7"/>
<rect x="1385.9" y="397" width="7" height="67.6" rx="0" stroke="#444" stroke-width="0.8" fill="#fff" />
<ellipse cx="1389.4" cy="397" rx="3.5" ry="1.6" fill="#fff" stroke="#444" stroke-width="0.7"/>
<rect x="1424.5" y="397" width="7" height="67.6" rx="0" stroke="#444" stroke-width="0.8" fill="#fff" />
<ellipse cx="1428.0" cy="397" rx="3.5" ry="1.6" fill="#fff" stroke="#444" stroke-width="0.7"/>
<rect x="1463.5" y="397" width="7" height="67.6" rx="0" stroke="#444" stroke-width="0.8" fill="#fff" />
<ellipse cx="1467.0" cy="397" rx="3.5" ry="1.6" fill="#fff" stroke="#444" stroke-width="0.7"/>
<circle cx="1331.3" cy="455.8" r="1.8" stroke="#444" stroke-width="0.7" fill="none"/>
<circle cx="1369" cy="455.8" r="1.8" stroke="#444" stroke-width="0.7" fill="none"/>
<circle cx="1407.7" cy="455.8" r="1.8" stroke="#444" stroke-width="0.7" fill="none"/>
<circle cx="1446.7" cy="455.8" r="1.8" stroke="#444" stroke-width="0.7" fill="none"/>
<circle cx="1484.5" cy="455.8" r="1.8" stroke="#444" stroke-width="0.7" fill="none"/>
<path d="M1316 464.6L1500.5 464.6" stroke="#444" stroke-width="0.8" />
<path d="M1316 399.4L1500.5 399.4" stroke="#555" stroke-width="0.7" />
<path d="M1316 467L1500.5 467" stroke="#888" stroke-width="0.6" />
<path d="M1345.5 464.6L1345.5 480.5" stroke="#666" stroke-width="0.7" />
<path d="M1469.5 464.6L1469.5 480.5" stroke="#666" stroke-width="0.7" />
<path d="M1517.3 385.7L1553 385.7" stroke="#444" stroke-width="0.8" />
<path d="M1517.3 392L1553 392" stroke="#666" stroke-width="0.7" />
<path d="M1553 371L1580 371" stroke="#444" stroke-width="0.9" />
<path d="M1553 371L1553 480" stroke="#444" stroke-width="0.8" />
<path d="M1517.3 420L1553 420" stroke="#999" stroke-width="0.5" />
<path d="M1517.3 433L1553 433" stroke="#888" stroke-width="0.6" />
<rect x="1519.4" y="438" width="32.3" height="42.5" rx="0" stroke="#888" stroke-width="0.6" fill="none" />
<path d="M1519.4 459L1535.5 438 1551.7 459 1535.5 480Z" stroke="#aaa" stroke-width="0.5" fill="none" stroke-dasharray="2 1"/>
<path d="M1535.5 438L1535.5 480.5" stroke="#888" stroke-width="0.6" />
<path d="M1062 487.5L1075 487.8" stroke="#111" stroke-width="1.6" />
<path d="M1290 486.2L1580 486.2" stroke="#444" stroke-width="0.8" />
<path d="M1290 491.8L1580 492.8" stroke="#111" stroke-width="1.5" />
<path d="M1290 496L1580 496.5" stroke="#555" stroke-width="0.8" />
<path d="M1300 501.2L1580 501.2" stroke="#333" stroke-width="0.9" />
<path d="M1290 491.500V503H1300" stroke="#111" stroke-width="1.8" fill="none" />
<path d="M1296 503.500L1442.500 556.800 1580 560.800" stroke="#111" stroke-width="1.8" fill="none" />
<path d="M1296 503.500Q1300 506.500 1306 505" stroke="#333" stroke-width="0.8" fill="none" />
<path d="M1394.2 501L1394.2 540" stroke="#333" stroke-width="0.9" />
<path d="M1404.7 501L1404.7 543.5" stroke="#333" stroke-width="0.9" />
<path d="M1495 499L1495 558.5" stroke="#333" stroke-width="0.9" />
<path d="M1504.7 499L1504.7 558.5" stroke="#333" stroke-width="0.9" />
<path d="M1404.7 507L1495.5 542" stroke="#444" stroke-width="0.8" />
<path d="M1422 503Q1445 505 1452 512T1468 521L1580 525" stroke="#999" stroke-width="0.6" fill="none" />
<path d="M1505 546.500Q1540 555 1580 554.800" stroke="#999" stroke-width="0.6" fill="none" />
<text x="1147.4" y="533.5" font-size="5" fill="#161616" text-anchor="start" font-family="Liberation Sans" font-weight="bold" stroke="none" textLength="48.6" lengthAdjust="spacingAndGlyphs" >RETAINING WALL - SEE</text>
<text x="1147.4" y="539" font-size="5" fill="#161616" text-anchor="start" font-family="Liberation Sans" font-weight="bold" stroke="none" textLength="48.6" lengthAdjust="spacingAndGlyphs" >STRUCTURAL DRAWINGS</text>
<path d="M1196 537Q1262 536 1290 497" stroke="#333" stroke-width="0.8" fill="none" />
<path d="M527 700.4L1580 700.4" stroke="#6a6a6a" stroke-width="0.8" />
<path d="M527 721L1580 721" stroke="#6a6a6a" stroke-width="0.8" />
<path d="M527 738L1580 738" stroke="#777" stroke-width="0.8" />
<path d="M569 700.4L569 738" stroke="#555" stroke-width="0.8" />
<text x="541.3" y="715.7" font-size="15" fill="#111" text-anchor="start" font-family="Liberation Sans" font-weight="normal" stroke="none" textLength="15" lengthAdjust="spacingAndGlyphs" >G1</text>
<text x="530" y="732.5" font-size="4.5" fill="#161616" text-anchor="start" font-family="Liberation Sans" font-weight="bold" stroke="none" textLength="35" lengthAdjust="spacingAndGlyphs" >SCALE: 1/8" = 1'-0"</text>
<rect x="543" y="672.4" width="84.2" height="14.8" rx="0" stroke="#444" stroke-width="0.8" fill="none" />
<circle cx="549" cy="679.8" r="3" stroke="#555" stroke-width="0.6" fill="none"/>
<text x="549" y="681.5" font-size="4.5" fill="#161616" text-anchor="middle" font-family="Liberation Sans" font-weight="bold" stroke="none" >T</text>
<text x="555" y="681.8" font-size="5.5" fill="#555" text-anchor="start" font-family="Liberation Sans" font-weight="bold" stroke="none" textLength="38" lengthAdjust="spacingAndGlyphs" >TEMPERED GLASS</text>
<circle cx="764" cy="798.2" r="5.6" stroke="#555" stroke-width="0.8" fill="none"/>
<text x="764" y="800.4000000000001" font-size="6" fill="#555" text-anchor="middle" font-family="Liberation Sans" font-weight="bold" stroke="none" >6</text>
<circle cx="783.9" cy="789.7" r="5.6" stroke="#555" stroke-width="0.8" fill="none"/>
<text x="783.9" y="791.9000000000001" font-size="6" fill="#555" text-anchor="middle" font-family="Liberation Sans" font-weight="bold" stroke="none" >5</text>
<circle cx="985.5" cy="789.7" r="5.6" stroke="#555" stroke-width="0.8" fill="none"/>
<text x="985.5" y="791.9000000000001" font-size="6" fill="#555" text-anchor="middle" font-family="Liberation Sans" font-weight="bold" stroke="none" >4</text>
<circle cx="1186.3" cy="789.7" r="5.6" stroke="#555" stroke-width="0.8" fill="none"/>
<text x="1186.3" y="791.9000000000001" font-size="6" fill="#555" text-anchor="middle" font-family="Liberation Sans" font-weight="bold" stroke="none" >3</text>
<circle cx="1239.4" cy="789.7" r="5.6" stroke="#555" stroke-width="0.8" fill="none"/>
<text x="1239.4" y="791.9000000000001" font-size="5" fill="#555" text-anchor="middle" font-family="Liberation Sans" font-weight="bold" stroke="none" >2.4</text>
<circle cx="1278.1" cy="789.7" r="5.6" stroke="#555" stroke-width="0.8" fill="none"/>
<text x="1278.1" y="791.9000000000001" font-size="6" fill="#555" text-anchor="middle" font-family="Liberation Sans" font-weight="bold" stroke="none" >2</text>
<circle cx="1295.4" cy="798.2" r="5.6" stroke="#555" stroke-width="0.8" fill="none"/>
<text x="1295.4" y="800.4000000000001" font-size="4.5" fill="#555" text-anchor="middle" font-family="Liberation Sans" font-weight="bold" stroke="none" >dH</text>
<circle cx="1347" cy="789.7" r="5.6" stroke="#555" stroke-width="0.8" fill="none"/>
<text x="1347" y="791.9000000000001" font-size="6" fill="#555" text-anchor="middle" font-family="Liberation Sans" font-weight="bold" stroke="none" >1</text>
<path d="M764 804V822.4L773.5 834.4V957" stroke="#777" stroke-width="0.7" fill="none" stroke-dasharray="7 1.5 1.5 1.5"/>
<path d="M1295.4 804V822.4L1286 834.4" stroke="#888" stroke-width="0.7" fill="none" stroke-dasharray="7 1.5 1.5 1.5"/>
<path d="M1286 834.4L1285.5 957" stroke="#777" stroke-width="0.7" />
<path d="M783.9 795.5L783.9 957" stroke="#8a8a8a" stroke-width="0.6" stroke-dasharray="7 1.5 1.5 1.5"/>
<path d="M985.5 795.5L985.5 957" stroke="#8a8a8a" stroke-width="0.6" stroke-dasharray="7 1.5 1.5 1.5"/>
<path d="M1186.3 795.5L1186.3 957" stroke="#8a8a8a" stroke-width="0.6" stroke-dasharray="7 1.5 1.5 1.5"/>
<path d="M1239.4 795.5L1239.4 957" stroke="#8a8a8a" stroke-width="0.6" stroke-dasharray="7 1.5 1.5 1.5"/>
<path d="M1278.1 795.5L1278.1 957" stroke="#8a8a8a" stroke-width="0.6" stroke-dasharray="7 1.5 1.5 1.5"/>
<path d="M1347 795.5L1347 957" stroke="#8a8a8a" stroke-width="0.6" stroke-dasharray="7 1.5 1.5 1.5"/>
<path d="M1165 842.2L1580 842.2" stroke="#333" stroke-width="0.8" />
<path d="M1169.5 838.500l-6.500 3.700 6.500 3.700" stroke="#111" stroke-width="1.1" fill="none" />
<text x="1212.4" y="840.3" font-size="5.5" fill="#161616" text-anchor="start" font-family="Liberation Sans" font-weight="bold" stroke="none" textLength="24.2" lengthAdjust="spacingAndGlyphs" >NEW WORK</text>
<text x="935" y="903.3" font-size="5.5" fill="#161616" text-anchor="start" font-family="Liberation Sans" font-weight="bold" stroke="none" textLength="40.5" lengthAdjust="spacingAndGlyphs" >NEW PIER BEYOND</text>
<path d="M935 901Q893 903 867 946" stroke="#333" stroke-width="0.8" fill="none" />
<path d="M866.500 947l0.200-3.500 2.300 1.600z" stroke="#111" stroke-width="0.5" fill="#111" />
<text x="1030.5" y="927.5" font-size="5.5" fill="#161616" text-anchor="start" font-family="Liberation Sans" font-weight="bold" stroke="none" textLength="42" lengthAdjust="spacingAndGlyphs" >NEW WALL BEYOND</text>
<path d="M1030 925.500Q1000 927 977 957" stroke="#333" stroke-width="0.8" fill="none" />
<text x="1281.6" y="897" font-size="5.5" fill="#161616" text-anchor="start" font-family="Liberation Sans" font-weight="bold" stroke="none" textLength="48.4" lengthAdjust="spacingAndGlyphs" >NEW BUILDING BEYOND</text>
<path d="M1330 895Q1372 897 1397.700 942" stroke="#333" stroke-width="0.8" fill="none" />
<path d="M1398.200 943l-3-2.200 2.800-1.300z" stroke="#111" stroke-width="0.5" fill="#111" />
<path d="M830.700 947.500L852 946.500 873 947.500V950.500H869.500L868 957M830.700 947.500V950.500H834L835.500 957" stroke="#333" stroke-width="0.8" fill="none" />
<path d="M852.8 924.6L852.8 947" stroke="#333" stroke-width="0.9" />
<path d="M1289.400 957V947H1299.500V942.300H1486.700V947H1496.700V950H1494L1492.500 957M1289.400 950H1292L1293.500 957" stroke="#333" stroke-width="0.8" fill="none" />
<path d="M1310.5 924.6L1310.5 942" stroke="#333" stroke-width="0.9" />
<path d="M1475.7 924.6L1475.7 942" stroke="#333" stroke-width="0.9" />
<path d="M1524 906L1580 906" stroke="#555" stroke-width="0.9" />
<path d="M1524 909L1580 909" stroke="#888" stroke-width="0.7" />
<path d="M1524 912L1580 912" stroke="#999" stroke-width="0.7" />
<path d="M1526 917L1580 917" stroke="#999" stroke-width="0.7" />
<path d="M1526 920.5L1580 920.5" stroke="#777" stroke-width="1.6" />
<path d="M1526 926L1580 926" stroke="#aaa" stroke-width="0.6" />
<path d="M1526 933L1580 933" stroke="#aaa" stroke-width="0.6" />
<path d="M1526 945.5L1580 945.5" stroke="#777" stroke-width="1.8" />
<path d="M1526 948.5L1580 948.5" stroke="#aaa" stroke-width="0.7" />
<path d="M1524 906L1524 912" stroke="#555" stroke-width="0.8" />
<path d="M1526 912L1526 957" stroke="#777" stroke-width="0.7" />
<path d="M799.4 189L799.4 526" stroke="#000" stroke-width="1.2" />
<path d="M799.4 719L799.4 957" stroke="#000" stroke-width="1.2" />
<path d="M479 622.05L607 622.05" stroke="#000" stroke-width="1.15" />
<path d="M992 622.05L1580 622.05" stroke="#000" stroke-width="1.15" />
</svg>
</div>

<!-- HUD overlay -->
<div class="a" style="left:607px;top:526px;width:385px;height:193px;background:rgba(255,255,255,.72);border:1px solid #dcdcdc;box-shadow:0 0 2px rgba(0,0,0,.12)"></div>
<svg class="a" style="left:479px;top:189px" width="1102" height="769" viewBox="479 189 1102 769" fill="none">
<text x="574.4" y="715.7" font-size="15" fill="#111" font-family="Liberation Sans" textLength="98" lengthAdjust="spacingAndGlyphs">NORTH ELEVATION</text>
<path d="M607 700.4H992M607 721H992" stroke="#9a9a9a" stroke-width=".9"/>
<path d="M607 672.4H627.2V687.2H607" stroke="#aaa" stroke-width=".8"/>
</svg>
<div class="a" style="left:798.900px;top:574px;width:1.100px;height:97px;background:#111"></div>
<div class="a" style="left:751px;top:621.500px;width:97px;height:1.100px;background:#111"></div>
<div class="t b" style="transform-origin:0 0;transform:scaleX(1.0392);left:613px;top:538px;font-size:12px;color:#7d7d7d">deduct not assigned to shape</div>
<div class="a" style="left:893px;top:535px;width:95px;height:16px;background:#3b8138"></div>
<div class="t b" style="transform-origin:0 0;transform:scaleX(1.0382);left:895px;top:538px;font-size:12px;color:#fff">Drawing: Area</div>
<div class="t b" style="transform-origin:0 0;transform:scaleX(1.0300);left:897px;top:560px;font-size:12px;color:#1414b8">0.00&deg;</div>
<div class="t b" style="transform-origin:0 0;transform:scaleX(1.0303);left:897px;top:582px;font-size:12px;color:#1414b8">0' 0"</div>
<svg class="a" style="left:763px;top:697px" width="21" height="17" viewBox="0 0 21 17"><rect x=".75" y=".75" width="19.5" height="15.5" rx="2" fill="#fefeff" stroke="#222" stroke-width="1.5"/><g fill="#8a8aec"><rect x="3" y="4" width="1" height="1"/><rect x="10" y="4" width="1" height="1"/><rect x="7" y="7" width="1" height="1"/><rect x="14" y="7" width="1" height="1"/><rect x="3" y="10" width="1" height="1"/><rect x="10" y="10" width="1" height="1"/><rect x="7" y="13" width="1" height="1"/><rect x="14" y="13" width="1" height="1"/><rect x="17" y="4" width="1" height="1"/><rect x="17" y="10" width="1" height="1"/></g></svg>
<div class="a" style="left:784px;top:697px;width:73px;height:17px;background:#ececec;border:1px solid #cfcfcf"></div>
<div class="t b" style="transform-origin:0 0;transform:scaleX(0.9532);left:787px;top:699px;font-size:13px;color:#111">Panel area</div>
<svg class="a" style="left:799px;top:622px" width="13" height="20" viewBox="0 0 13 20"><path d="M1 1v14l3.200-3 2.300 5.500 2-0.900-2.300-5.300h4.300z" fill="#fff" stroke="#111" stroke-width="1"/></svg>
<!-- v scrollbar -->
<div class="a" style="left:1581px;top:189px;width:17px;height:769px;background:#efefef"></div>
<div class="a" style="left:1581.500px;top:250px;width:14.500px;height:442px;background:#b8b8b8"></div>
<svg class="a" style="left:1583px;top:194px" width="11" height="8" viewBox="0 0 11 8"><path d="M1.500 6.500l4-4 4 4" fill="none" stroke="#333" stroke-width="1.800"/></svg>
<svg class="a" style="left:1583px;top:945px" width="11" height="8" viewBox="0 0 11 8"><path d="M1.500 1.500l4 4 4-4" fill="none" stroke="#333" stroke-width="1.800"/></svg>
<!-- h scrollbar -->
<div class="a" style="left:479px;top:958px;width:1119px;height:16px;background:#efefef"></div>
<div class="a" style="left:497px;top:959px;width:656px;height:14px;background:#b8b8b8"></div>
<svg class="a" style="left:483px;top:960px" width="8" height="11" viewBox="0 0 8 11"><path d="M6.500 1.500l-4 4 4 4" fill="none" stroke="#333" stroke-width="1.800"/></svg>
<svg class="a" style="left:1568px;top:960px" width="8" height="11" viewBox="0 0 8 11"><path d="M1.500 1.500l4 4-4 4" fill="none" stroke="#333" stroke-width="1.800"/></svg>

<!-- top toolbar -->
<div class="t b tl" style="transform-origin:0 0;transform:scaleX(0.8771);left:489px;top:163.4px">Label:</div>
<div class="a" style="left:532px;top:157px;width:20px;height:23px;background:#fff"></div>
<svg class="a" style="left:541px;top:166px" width="7" height="5" viewBox="0 0 7 5"><path d="M0.500 0.500h6L3.500 4z" fill="#333"/></svg>
<div class="a sep" style="left:562px"></div>
<div class="t b tl" style="transform-origin:0 0;transform:scaleX(0.9058);left:576px;top:163.4px">Color:</div>
<div class="a" style="left:616px;top:157px;width:22px;height:22px;background:#0000f0"></div>
<div class="t b" style="left:622px;top:163px;font-size:10px;color:#0a0ab0">...</div>
<div class="a sep" style="left:646px"></div>
<div class="t b tl" style="transform-origin:0 0;transform:scaleX(0.8440);left:661px;top:163.4px">Fill:</div>
<div class="a" style="left:688px;top:157px;width:12px;height:22px;background:#fff"></div>
<div class="t b" style="left:690px;top:164px;font-size:10px;color:#111">...</div>
<svg class="a" style="left:704px;top:156px" width="44" height="23" viewBox="0 0 44 23"><defs><pattern id="dp1" width="23" height="23" patternUnits="userSpaceOnUse" x="4" y="4"><g fill="#2d2dc8"><rect x="0" y="0" width="1" height="1"/><rect x="8" y="0" width="1" height="1"/><rect x="15" y="0" width="1" height="1"/><rect x="4" y="4" width="1" height="1"/><rect x="12" y="4" width="1" height="1"/><rect x="19" y="4" width="1" height="1"/><rect x="0" y="8" width="1" height="1"/><rect x="8" y="8" width="1" height="1"/><rect x="15" y="8" width="1" height="1"/><rect x="4" y="12" width="1" height="1"/><rect x="12" y="12" width="1" height="1"/><rect x="19" y="12" width="1" height="1"/><rect x="0" y="15" width="1" height="1"/><rect x="8" y="15" width="1" height="1"/><rect x="15" y="15" width="1" height="1"/><rect x="4" y="19" width="1" height="1"/><rect x="12" y="19" width="1" height="1"/><rect x="19" y="19" width="1" height="1"/></g></pattern></defs><rect x=".75" y=".75" width="42.5" height="21.5" rx="0" fill="#cdcdd4"/><rect x=".75" y=".75" width="42.5" height="21.5" rx="0" fill="url(#dp1)" stroke="#1515e0" stroke-width="1.5"/></svg>
<div class="a sep" style="left:758px"></div>
<div class="t b tl" style="transform-origin:0 0;transform:scaleX(0.8453);left:773px;top:163.4px">Thickness:</div>
<div class="a" style="left:835px;top:159px;width:56px;height:19px;background:#fff"></div>
<div class="t" style="transform-origin:0 0;transform:scaleX(0.8562);left:851px;top:163.4px;font-size:12px;color:#000;-webkit-text-stroke:.2px #000">1.00</div>
<svg class="a" style="left:879px;top:161px" width="9" height="15" viewBox="0 0 9 15"><path d="M1.500 5l3-3 3 3M1.500 10l3 3 3-3" fill="none" stroke="#222" stroke-width="1.500"/></svg>
<div class="a sep" style="left:902px"></div>
<div class="t b tl" style="transform-origin:0 0;transform:scaleX(0.8733);left:916px;top:163.4px">Line Style:</div>
<div class="a" style="left:977px;top:157px;width:51px;height:23px;background:#fff"></div>
<div class="t" style="transform-origin:0 0;transform:scaleX(1.0117);left:982px;top:162.4px;font-size:12px;color:#111">Solid</div>
<svg class="a" style="left:1017px;top:165px" width="7" height="5" viewBox="0 0 7 5"><path d="M0.500 0.500h6L3.500 4z" fill="#333"/></svg>
<div class="a sep" style="left:1038px"></div>
<div class="a" style="left:1047px;top:162px;width:13px;height:13px;background:#fff;border:1px solid #dadada"></div>
<div class="t tl" style="transform-origin:0 0;transform:scaleX(0.9404);left:1064px;top:163.4px;font-weight:normal">Show Measurements</div>
<div class="a sep" style="left:1181px"></div>
<div class="a" style="left:1190px;top:162px;width:13px;height:13px;background:#fff;border:1px solid #dadada"></div>
<div class="t tl" style="transform-origin:0 0;transform:scaleX(0.9729);left:1208px;top:163.4px;font-weight:normal">Deduct</div>


<svg class="a" style="left:420px;top:150px" width="58" height="400" viewBox="420 150 58 400">
 <g fill="#0b5ea6" stroke="none">
  <!-- r1 cursors -->
  <path d="M430 158.500l8.500 8-3.700 0.300 2.200 4.500-1.800 0.800-2.200-4.600-3 2.600z"/>
  <path d="M464.500 157.500l5.500 6-2.400 0.200 1.400 3-1.300 0.600-1.400-3-1.800 1.600z" fill="#3fa4e0"/>
  <path d="M457.500 158.500l8.500 8-3.700 0.300 2.200 4.500-1.800 0.800-2.200-4.600-3 2.600z"/>
 </g>
 <!-- r2 undo/redo -->
 <g fill="none" stroke="#0b5ea6" stroke-width="2.200">
  <path d="M430 193.500a5 5 0 1 1-0.300 5.500"/><path d="M467 193.500a5 5 0 1 0 0.800 5.500"/>
 </g>
 <path d="M428 189.500v5.500h5.500z" fill="#0b5ea6"/><path d="M469.500 189.500v5.500h-5.500z" fill="#0b5ea6"/>
 <!-- r3 -->
 <rect x="426.500" y="220" width="15" height="14.500" rx="1.500" fill="#fff" stroke="#0b5ea6" stroke-width="1.300"/>
 <g fill="#0b2a55"><rect x="433" y="223" width="2" height="2"/><rect x="429.500" y="226.300" width="2" height="2"/><rect x="433" y="226.300" width="2" height="2"/><rect x="436.500" y="226.300" width="2" height="2"/><rect x="433" y="229.600" width="2" height="2"/></g>
 <circle cx="461" cy="225.500" r="3.800" fill="none" stroke="#0b5ea6" stroke-width="1.600"/><path d="M463.800 228.500l4.700 4.700" stroke="#0b5ea6" stroke-width="2"/><path d="M459 225.500h4M461 223.500v4" stroke="#0b5ea6" stroke-width="1"/>
 <!-- r4 -->
 <rect x="426" y="254" width="11" height="10.500" fill="#3893d3"/><rect x="431" y="249" width="11" height="11" fill="#0b3f78"/>
 <g fill="#0b5ea6"><path d="M455.500 250.500l5 5h-5z"/><path d="M465 250.500l5 5h-5z" /><path d="M455.500 258.500l5 5h-5z"/><path d="M465 258.500l5 5h-5z"/></g>
 <!-- r5 -->
 <path d="M427.500 281h13.500v10h-9.500l-4 3.500z" fill="#0b5ea6"/><path d="M430 284.500h8.500M430 287.500h8.500" stroke="#cfe4f5" stroke-width="1"/>
 <path d="M465.500 281h3.500v7h-3.500zM460 288.500h9v5h-9z" fill="#0b5ea6"/><path d="M461 290h8M461 292h8" stroke="#c2c2c2" stroke-width=".6"/>
 <!-- r6 -->
 <path d="M427 313.500h11.500l3.500 5-3.500 5H427z" fill="#0b5ea6"/><path d="M430 318.500h6m-2-2l2 2-2 2" stroke="#d8ebf8" stroke-width="1.100" fill="none"/>
 <path d="M464 312.500l6 7.500-3 2.500-7-6zM459 318.500l6 5-2 1.500h-7.500z" fill="#0b5ea6"/>
 <!-- r7 -->
 <path d="M427.500 354l14-10.500" stroke="#0b5ea6" stroke-width="1.200" fill="none"/><path d="M431 354.500h11v-8.500z" fill="#0b5ea6"/>
 <rect x="457.500" y="345.500" width="8" height="8" fill="none" stroke="#0b5ea6" stroke-width="1.500"/><path d="M468.500 344v11" stroke="#0b5ea6" stroke-width="1.500"/>
 <!-- r8 -->
 <path d="M434.500 374v12" stroke="#0b5ea6" stroke-width="1.300"/><path d="M427 377l5 3-5 3zM442 377l-5 3 5 3z" fill="#0b5ea6"/>
 <path d="M456.500 380h13" stroke="#0b5ea6" stroke-width="1.300"/><path d="M460 373.500l3 4.500 3-4.500zM460 386.500l3-4.500 3 4.500z" fill="#0b5ea6"/>
 <!-- r9 -->
 <path d="M437.500 407a5 5 0 1 0 2.300 7" fill="none" stroke="#7fa3c0" stroke-width="2"/><path d="M440.500 404v5.500h-5.500z" fill="#7fa3c0"/>
 <path d="M457.500 415.500a5.500 6.500 0 0 1 11 0" fill="none" stroke="#0b5ea6" stroke-width="2"/><rect x="455.500" y="413.500" width="3.500" height="3.500" rx="1" fill="#fff" stroke="#0b5ea6" stroke-width="1.200"/><rect x="467" y="413.500" width="3.500" height="3.500" rx="1" fill="#fff" stroke="#0b5ea6" stroke-width="1.200"/>
 <!-- r10 -->
 <rect x="427.500" y="437" width="12.500" height="10" fill="#0b5ea6"/><path d="M429 445l3-4 2.500 2.500 2-1.500 2 3z" fill="#d9ecf8"/><path d="M438 435.500h4v6" fill="none" stroke="#0b5ea6" stroke-width="1.200"/>
 <circle cx="462" cy="442.500" r="6" fill="#0b5ea6"/><path d="M458.500 440l3 1 1 3-2 2.500-2.500-2zM462 437.500l3 1-1 2z" fill="#d9ecf8"/><circle cx="469" cy="437" r="2.200" fill="#c2c2c2" stroke="#0b5ea6" stroke-width="1"/>
 <!-- r11 -->
 <rect x="421.500" y="459.500" width="26" height="26" fill="#c6c6c8" stroke="#1b2a86" stroke-width="1"/>
 <path d="M427 465.500h14l-1.500 13.500h-8.500z" fill="none" stroke="#0b5ea6" stroke-width="1.300"/>
 <g fill="#fff" stroke="#0b5ea6" stroke-width="1.100"><rect x="425.500" y="464" width="3" height="3"/><rect x="439.500" y="464" width="3" height="3"/><rect x="438" y="477.500" width="3" height="3"/><rect x="429.500" y="477.500" width="3" height="3"/></g>
 <path d="M431.500 471.500h6M434.500 468.500v6" stroke="#1a9a1a" stroke-width="2"/>
 <path d="M457 465.500h14l-1.500 13.500h-8.500z" fill="none" stroke="#0b5ea6" stroke-width="1.300"/>
 <g fill="#fff" stroke="#0b5ea6" stroke-width="1.100"><rect x="455.500" y="464" width="3" height="3"/><rect x="469.500" y="464" width="3" height="3"/><rect x="468" y="477.500" width="3" height="3"/><rect x="459.500" y="477.500" width="3" height="3"/></g>
 <path d="M461.500 471.500h6" stroke="#d23030" stroke-width="2"/>
 <!-- r12 -->
 <rect x="428.500" y="497.500" width="11" height="11" fill="#5d6d82" stroke="#0b5ea6" stroke-width="1.200"/><path d="M429 504l6-6M431 508l8-8M435 508l4-4" stroke="#c2c2c2" stroke-width=".8"/>
 <g fill="#fff" stroke="#0b5ea6" stroke-width="1.100"><rect x="425.500" y="494.500" width="3" height="3"/><rect x="439.500" y="494.500" width="3" height="3"/><rect x="439.500" y="508.500" width="3" height="3"/><rect x="425.500" y="508.500" width="3" height="3"/></g>
 <circle cx="463" cy="503.500" r="5.800" fill="#5d6d82" stroke="#0b5ea6" stroke-width="1.300"/><path d="M459 506l6.500-6.500M461 508.500l6.500-6.500" stroke="#c2c2c2" stroke-width=".8"/><circle cx="463" cy="496.500" r="1.500" fill="#fff" stroke="#0b5ea6" stroke-width="1"/>
 <!-- r13 -->
 <circle cx="437" cy="530.500" r="5" fill="none" stroke="#0b5ea6" stroke-width="2"/><path d="M433.500 534.500l-7 7.500" stroke="#0b5ea6" stroke-width="2.600" stroke-linecap="round"/>
</svg>


<!-- status bar -->
<div class="a" style="left:420px;top:975px;width:1178px;height:1px;background:#8d8d8d"></div>
<div class="a sd" style="left:421px"></div><div class="a sd" style="left:519px"></div><div class="a sd" style="left:663px"></div><div class="a sd" style="left:762px"></div><div class="a sd" style="left:821px"></div><div class="a sd" style="left:928px"></div><div class="a sd" style="left:1027px"></div><div class="a sd" style="left:1126px"></div><div class="a sd" style="left:1225px"></div><div class="a sd" style="left:1356px"></div><div class="a sd" style="left:1451px"></div>
<div class="t st" style="transform-origin:0 0;transform:scaleX(0.9994);left:457px;top:984px">Draw</div>
<svg class="a" style="left:523px;top:981px" width="15" height="15" viewBox="0 0 15 15"><circle cx="7.500" cy="7.500" r="6.500" fill="#d9481c" stroke="#e98e6e" stroke-width="1"/><text x="7.500" y="11" font-size="9" font-weight="bold" fill="#fff" text-anchor="middle" font-family="Liberation Sans">?</text></svg>
<div class="t st b" style="transform-origin:0 0;transform:scaleX(0.8484);left:550px;color:#1651c7;text-decoration:underline">Scale:</div>
<div class="t st b" style="transform-origin:0 0;transform:scaleX(0.9385);left:596px">1/4"</div>
<svg class="a" style="left:652px;top:985px" width="7" height="5" viewBox="0 0 7 5"><path d="M0.500 0.500h6L3.500 4z" fill="#555"/></svg>
<div class="t st b" style="transform-origin:0 0;transform:scaleX(0.9257);left:688px">Pitch: n/a</div>
<div class="t st b" style="transform-origin:0 0;transform:scaleX(0.9589);left:779px;color:#1c2a86">0.00&deg;</div>
<div class="t st b" style="transform-origin:0 0;transform:scaleX(0.9511);left:863px;color:#1c2a86">0' 0"</div>
<div class="t st b" style="transform-origin:0 0;transform:scaleX(0.8134);left:968px">11%</div>
<div class="t st b" style="transform-origin:0 0;transform:scaleX(0.9114);left:1040px">16902 x 12000</div>
<div class="t st b" style="transform-origin:0 0;transform:scaleX(0.9456);left:1156px">300 DPI</div>
<svg class="a" style="left:1232px;top:980px" width="18" height="16" viewBox="0 0 18 16"><rect x="1.500" y="4.500" width="15" height="9" rx="1" fill="#c8d2ea" stroke="#2a3f7f"/><path d="M4 7h2M8 7h2M12 7h2M4 10h10" stroke="#2a3f7f" stroke-width="1.200"/><path d="M4 3l10 11M14 3L4 14" stroke="#d61f1f" stroke-width="1.600"/><path d="M7 1.500l2 2.500" stroke="#2aa198" stroke-width="1.200"/></svg>
<div class="t st b" style="transform-origin:0 0;transform:scaleX(0.8273);left:1261px;font-size:11px;top:984px">Keyboard Command</div>
<svg class="a" style="left:1363px;top:980px" width="20" height="16" viewBox="0 0 20 16"><path d="M1 5.500h4l5-4.500v14l-5-4.500H1z" fill="#111"/><path d="M12.500 5.500l3.500 3.500M16 5.500L12.500 9" stroke="#111" stroke-width="1.200"/></svg>
<div class="t st b" style="transform-origin:0 0;transform:scaleX(0.8180);left:1391px;font-size:11px;top:984px">Sounds</div>

<!--CENTERCONTENT-->

<!-- ===== RIGHT PANEL ===== -->

<div class="a" style="left:1603px;top:101px;width:241px;height:899px;background:#fff"></div>
<div class="a" style="left:1603px;top:101px;width:4px;height:899px;background:#f6f6f6"></div>
<div class="a" style="left:1607px;top:121px;width:1px;height:879px;background:#d4d0d0"></div>
<div class="a navy" style="left:1607px;top:101px;width:237px;height:20px"></div>
<div class="t" style="transform-origin:0 0;transform:scaleX(0.9721);left:1612px;top:104px;font-size:15px;color:#e8ebfa">Drawing Properties</div>
<svg class="a" style="left:1828px;top:105px" width="8" height="11" viewBox="0 0 8 11"><path d="M2.2 0.8h3.6v4.6l1.4 1.6H0.8l1.4-1.6z" fill="none" stroke="#d7dbf2" stroke-width="1"/><path d="M4 7v3.500" stroke="#d7dbf2" stroke-width="1"/></svg>
<div class="a pb" style="left:1609px;top:123px;width:75px;height:21px"></div><div class="a" style="left:1614px;top:132.0px;width:12px;height:4.5px;background:#0d9a0d;box-shadow:0 0 1px #0d9a0d"></div><div class="t" style="transform-origin:0 0;transform:scaleX(0.9316);left:1630px;top:128.7px;font-size:12px;color:#111">Auto Pan</div><div class="a pb" style="left:1688px;top:123px;width:75px;height:21px"></div><div class="a" style="left:1693px;top:132.0px;width:12px;height:4.5px;background:#0d9a0d;box-shadow:0 0 1px #0d9a0d"></div><div class="t" style="transform-origin:0 0;transform:scaleX(0.9275);left:1709px;top:128.7px;font-size:12px;color:#111">Snap</div><div class="a pb" style="left:1767px;top:123px;width:75px;height:21px"></div><div class="a" style="left:1772px;top:132.0px;width:12px;height:4.5px;background:#0d9a0d;box-shadow:0 0 1px #0d9a0d"></div><div class="t" style="transform-origin:0 0;transform:scaleX(0.9173);left:1788px;top:128.7px;font-size:12px;color:#111">Measurem</div><div class="a pb" style="left:1609px;top:148px;width:75px;height:21px"></div><div class="a" style="left:1614px;top:157.0px;width:12px;height:4.5px;background:#a60f0f;box-shadow:0 0 1px #a60f0f"></div><div class="t" style="transform-origin:0 0;transform:scaleX(0.9704);left:1630px;top:153.7px;font-size:12px;color:#111">Grid</div><div class="a" style="left:1669px;top:149px;width:1px;height:19px;background:#9a9a9a;box-shadow:1px 0 0 #dcdcdc"></div><svg class="a" style="left:1673px;top:156.5px" width="7" height="5" viewBox="0 0 7 5"><path d="M0.5 0.5h6L3.5 4z" fill="#555"/></svg><div class="a pb" style="left:1688px;top:148px;width:75px;height:21px"></div><div class="a" style="left:1693px;top:157.0px;width:12px;height:4.5px;background:#0d9a0d;box-shadow:0 0 1px #0d9a0d"></div><div class="t" style="transform-origin:0 0;transform:scaleX(1.0328);left:1709px;top:153.7px;font-size:12px;color:#111">Ortho</div><div class="a" style="left:1748px;top:149px;width:1px;height:19px;background:#9a9a9a;box-shadow:1px 0 0 #dcdcdc"></div><svg class="a" style="left:1752px;top:156.5px" width="7" height="5" viewBox="0 0 7 5"><path d="M0.5 0.5h6L3.5 4z" fill="#555"/></svg><div class="a pb" style="left:1767px;top:148px;width:75px;height:21px"></div><div class="a" style="left:1772px;top:157.0px;width:12px;height:4.5px;background:#0d9a0d;box-shadow:0 0 1px #0d9a0d"></div><div class="t" style="transform-origin:0 0;transform:scaleX(0.9397);left:1788px;top:153.7px;font-size:12px;color:#111">Tape In</div><div class="a" style="left:1827px;top:149px;width:1px;height:19px;background:#9a9a9a;box-shadow:1px 0 0 #dcdcdc"></div><svg class="a" style="left:1831px;top:156.5px" width="7" height="5" viewBox="0 0 7 5"><path d="M0.5 0.5h6L3.5 4z" fill="#555"/></svg><div class="a pb pp" style="left:1609px;top:172px;width:75px;height:24px"></div><div class="a" style="left:1614px;top:182.0px;width:12px;height:4.5px;background:#0d9a0d;box-shadow:0 0 1px #0d9a0d"></div><div class="t" style="transform-origin:0 0;transform:scaleX(0.9615);left:1630px;top:178.7px;font-size:12px;color:#111">HUD</div><div class="a pb" style="left:1688px;top:174px;width:75px;height:21px"></div><div class="a" style="left:1693px;top:183.0px;width:12px;height:4.5px;background:#0d9a0d;box-shadow:0 0 1px #0d9a0d"></div><div class="t" style="transform-origin:0 0;transform:scaleX(0.9597);left:1709px;top:179.7px;font-size:12px;color:#111">X-Ray</div><div class="a" style="left:1748px;top:175px;width:1px;height:19px;background:#9a9a9a;box-shadow:1px 0 0 #dcdcdc"></div><svg class="a" style="left:1752px;top:182.5px" width="7" height="5" viewBox="0 0 7 5"><path d="M0.5 0.5h6L3.5 4z" fill="#555"/></svg><div class="a pb" style="left:1767px;top:174px;width:75px;height:21px"></div><div class="a" style="left:1772px;top:183.0px;width:12px;height:4.5px;background:#a60f0f;box-shadow:0 0 1px #a60f0f"></div><div class="t" style="transform-origin:0 0;transform:scaleX(0.9561);left:1788px;top:179.7px;font-size:12px;color:#111">Performar</div>
<div class="a navy" style="left:1612px;top:201px;width:232px;height:17px"></div>
<div class="t" style="transform-origin:0 0;transform:scaleX(0.9383);left:1612px;top:202px;font-size:14.500px;color:#fff">Area Condition</div>
<div class="a" style="left:1608px;top:219px;width:236px;height:1px;background:#d8d8d8"></div>
<div class="a" style="left:1613px;top:226px;width:240px;height:155px;border:1px solid #c6c6c6;background:#fff"></div>
<div class="a" style="left:1613px;top:255px;width:240px;height:1px;background:#c6c6c6"></div>
<div class="t b" style="transform-origin:0 0;transform:scaleX(0.9419);left:1623px;top:236.4px;font-size:12px">General Area Properties</div>
<div class="a" style="left:1623px;top:262px;width:87.500px;height:24px;overflow:hidden"><div class="t b" style="transform-origin:0 0;transform:scaleX(0.9891);left:0;top:5.9px;font-size:12px">Condition Name</div></div>
<div class="t b" style="transform-origin:0 0;transform:scaleX(0.9160);left:1723px;top:270.4px;font-size:12px">Panel area</div>
<div class="t b" style="transform-origin:0 0;transform:scaleX(0.8872);left:1681px;top:295.4px;font-size:12px">Page:</div>
<div class="t b" style="transform-origin:0 0;transform:scaleX(0.9058);left:1678px;top:322.4px;font-size:12px">Color:</div>
<div class="a" style="left:1716px;top:317px;width:23px;height:23px;background:#0000f0"></div>
<div class="t b" style="left:1722px;top:324px;font-size:10px;color:#0a0ab0">...</div>
<div class="t b" style="transform-origin:0 0;transform:scaleX(0.8440);left:1692px;top:349.4px;font-size:12px">Fill:</div>
<div class="a" style="left:1715px;top:344px;width:20px;height:23px;background:#fff;border:1px solid #cfcfcf"></div>
<div class="t b" style="left:1720px;top:352px;font-size:10px;color:#111">...</div>
<svg class="a" style="left:1734px;top:344px" width="41" height="23" viewBox="0 0 41 23"><defs><pattern id="dp2" width="23" height="23" patternUnits="userSpaceOnUse" x="4" y="4"><g fill="#3a3ad0"><rect x="0" y="0" width="1" height="1"/><rect x="8" y="0" width="1" height="1"/><rect x="15" y="0" width="1" height="1"/><rect x="4" y="4" width="1" height="1"/><rect x="12" y="4" width="1" height="1"/><rect x="19" y="4" width="1" height="1"/><rect x="0" y="8" width="1" height="1"/><rect x="8" y="8" width="1" height="1"/><rect x="15" y="8" width="1" height="1"/><rect x="4" y="12" width="1" height="1"/><rect x="12" y="12" width="1" height="1"/><rect x="19" y="12" width="1" height="1"/><rect x="0" y="15" width="1" height="1"/><rect x="8" y="15" width="1" height="1"/><rect x="15" y="15" width="1" height="1"/><rect x="4" y="19" width="1" height="1"/><rect x="12" y="19" width="1" height="1"/><rect x="19" y="19" width="1" height="1"/></g></pattern></defs><rect x=".75" y=".75" width="39.5" height="21.5" rx="2" fill="#fdfdff"/><rect x=".75" y=".75" width="39.5" height="21.5" rx="2" fill="url(#dp2)" stroke="#1a2fe0" stroke-width="1.5"/></svg>
<!-- h scroll -->
<svg class="a" style="left:1612px;top:721px" width="5" height="8" viewBox="0 0 5 8"><path d="M4.500 0.500v7L0.500 4z" fill="#444"/></svg>
<div class="a" style="left:1620px;top:723px;width:185px;height:4px;background:#cdcdcd"></div>
<svg class="a" style="left:1834px;top:721px" width="5" height="8" viewBox="0 0 5 8"><path d="M0.500 0.500v7L4.500 4z" fill="#444"/></svg>
<div class="a" style="left:1608px;top:733px;width:236px;height:1px;background:#d4d4d4"></div>
<!-- calculations -->
<div class="a" style="left:1613px;top:739px;width:226px;height:260px;border:1px solid #111;background:#fff"></div>
<div class="a navy" style="left:1614px;top:740px;width:224px;height:25px"></div>
<div class="t b" style="left:1621px;top:745px;font-size:15px;color:#fff">&Sigma;</div>
<div class="t" style="transform-origin:0 0;transform:scaleX(0.8987);left:1638px;top:746px;font-size:14.500px;color:#fff">Calculations</div>
<div class="a" style="left:1614px;top:765px;width:224px;height:96px;background:#c6c6c6"></div>
<div class="a gl" style="left:1614px;top:788.6px;width:224px;height:1.400px"></div>
<div class="a gl" style="left:1614px;top:812.6px;width:224px;height:1.400px"></div>
<div class="a gl" style="left:1614px;top:836.6px;width:224px;height:1.400px"></div>
<div class="a gl" style="left:1614px;top:860.6px;width:224px;height:1.400px"></div>
<div class="a gl" style="left:1646.800px;top:765px;width:1.400px;height:96px"></div>
<div class="a gl" style="left:1742.600px;top:765px;width:1.400px;height:96px"></div>
<div class="t b" style="transform-origin:0 0;transform:scaleX(0.9690);left:1674px;top:771.4px;font-size:12px">Current</div>
<div class="t b" style="transform-origin:0 0;transform:scaleX(0.9776);left:1783px;top:771.4px;font-size:12px">All</div>
<div class="t b" style="transform-origin:0 0;transform:scaleX(0.8473);left:1619px;top:795.4px;font-size:12px">SF</div>
<div class="t b" style="transform-origin:0 0;transform:scaleX(0.8860);left:1619px;top:819.4px;font-size:12px">LF</div>
<div class="t b" style="transform-origin:0 0;transform:scaleX(0.8473);left:1619px;top:843.4px;font-size:12px">ST</div>
<div class="t b" style="transform-origin:0 0;transform:scaleX(1.0274);left:1683px;top:795.4px;font-size:12px">0.00</div>
<div class="t b" style="transform-origin:0 0;transform:scaleX(1.0274);left:1683px;top:819.4px;font-size:12px">0.00</div>
<div class="t b" style="transform-origin:0 0;transform:scaleX(1.0274);left:1683px;top:843.4px;font-size:12px">0.00</div>
<div class="t b" style="transform-origin:0 0;transform:scaleX(0.9846);left:1767px;top:795.4px;font-size:12px">1,049.17</div>
<div class="t b" style="transform-origin:0 0;transform:scaleX(1.0081);left:1772px;top:819.4px;font-size:12px">150.88</div>
<div class="t b" style="transform-origin:0 0;transform:scaleX(1.0274);left:1778px;top:843.4px;font-size:12px">4.00</div>
<div class="a" style="left:1767px;top:953px;width:67px;height:34px;background:radial-gradient(ellipse at center,rgba(90,90,90,.35) 60%,rgba(90,90,90,0) 100%)"></div>
<svg class="a" style="left:1614px;top:862px" width="224" height="136" viewBox="1614 862 224 136" fill="none">
<g stroke="#9a9a9a" stroke-width="0.7" opacity=".9">
<path d="M1617 896.500H1690" stroke="#555" stroke-width="1"/>
<path d="M1690 896.500L1705 903 1745 901.500" stroke="#777" stroke-width=".8"/>
<path d="M1670 884H1689V896H1670zM1689 886H1715V897M1689 890H1715M1693 886V897M1697 886V897M1701 886V897M1705 886V897M1709 886V897" />
<path d="M1671 886.500H1688" stroke="#444" stroke-width="1.200"/>
<path d="M1725 886H1739V896H1725zM1727 889.500H1738" stroke="#888"/>
<path d="M1715 897H1745V900H1700" stroke="#888"/>
<path d="M1618 880H1640M1622 874V896M1647 874H1652M1677 875V882M1697 876V884M1720 876V882" stroke="#c4c4c4" stroke-width=".6"/>
<path d="M1742 884H1752M1742 888H1752M1748 893H1752M1750 899H1756M1752 904H1758" stroke="#bbb" stroke-width=".7"/>
</g>
<rect x="1638.500" y="897.500" width="36.500" height="17.500" fill="#fff" stroke="#8c8c8c" stroke-width="1"/>
<path d="M1619 917.500H1631" stroke="#999" stroke-width=".9"/><path d="M1618 913.500H1622M1618 975.500H1622" stroke="#ccc" stroke-width=".6"/>
<path d="M1650 929H1655M1682 929.500H1686M1718 930H1724M1690 934.500H1696M1660 935.500H1666M1720 937.500H1745M1712 938.500H1752" stroke="#cfcfcf" stroke-width=".7"/>
<g stroke="#9a9a9a" stroke-width="0.7">
<path d="M1617 942.500H1760" stroke="#c9c9c9" stroke-width=".6"/>
<path d="M1639.500 943H1688V951H1639.500zM1688 946H1735M1640 947H1688M1660 943V951M1668 943V951M1676 943V951" stroke="#aaa"/>
<path d="M1632 949.500H1640V955H1632z" stroke="#666"/><path d="M1632 950H1640" stroke="#333" stroke-width="1.200"/>
<path d="M1663 951.500H1678" stroke="#777" stroke-width="2"/>
<path d="M1617 957.500H1660L1700 956 1760 953.500" stroke="#777" stroke-width=".8"/>
<path d="M1728 943H1742V952H1728zM1745 945H1756V952H1745zM1731 947.500H1735M1749 947.500H1753" stroke="#aaa"/>
<path d="M1618 949H1624M1618 952H1622M1620 955H1628" stroke="#bbb" stroke-width=".7"/>
<path d="M1619 973H1631" stroke="#999" stroke-width=".9"/>
</g>
<g stroke="#c8c8c8" stroke-width=".7"><path d="M1760 907V978M1775.500 907V978" stroke="#e2e2e2"/><path d="M1762 932H1773M1762 935.500H1772M1762 940H1768M1763 947H1773M1762 951H1766M1762 955H1766M1764 962H1770M1764 966H1770" stroke="#b0b0b0"/><path d="M1762 971H1768" stroke="#8a8ad0" stroke-width="1.500"/></g>
<text x="1761" y="876" font-family="Liberation Serif" font-weight="bold" font-size="13" fill="#222" textLength="13" lengthAdjust="spacingAndGlyphs">JOB</text>
<path d="M1762 877.500H1774" stroke="#555" stroke-width=".8"/><circle cx="1767.200" cy="882" r="2.800" fill="#ddd" stroke="#888" stroke-width=".9"/>
<rect x="1613.600" y="869.600" width="102" height="70" stroke="#1414e0" stroke-width="1.400"/>
<rect x="1625.500" y="883.500" width="42.500" height="13.500" fill="#e9e9f4" stroke="#1414e0" stroke-width="2"/>
<path d="M1629 887h2M1637 886.500h3M1647 886.500h4M1660 886h4M1630 893.500h2M1637 892h6M1646 893h2M1653 893.500h2M1660 893.500h2" stroke="#33338a" stroke-width="1"/>
<path d="M1619.2 983.700V988.400" stroke="#222" stroke-width="1.1"/>
<path d="M1629.9 983.700V988.400" stroke="#222" stroke-width="1.5"/>
<path d="M1640.6 983.700V988.400" stroke="#222" stroke-width="1.1"/>
<path d="M1651.3 983.700V988.400" stroke="#222" stroke-width="1.5"/>
<path d="M1662.0 983.700V988.400" stroke="#222" stroke-width="1.1"/>
<path d="M1672.7 983.700V988.400" stroke="#222" stroke-width="1.5"/>
<path d="M1683.4 983.700V988.400" stroke="#222" stroke-width="1.1"/>
<path d="M1694.1 983.700V988.400" stroke="#222" stroke-width="1.5"/>
<path d="M1704.8 983.700V988.400" stroke="#222" stroke-width="1.1"/>
<path d="M1715.5 983.700V988.400" stroke="#222" stroke-width="1.5"/>
<path d="M1726.2 983.700V988.400" stroke="#222" stroke-width="1.1"/>
<path d="M1736.9 983.700V988.400" stroke="#222" stroke-width="1.5"/>
<path d="M1747.6 983.700V988.400" stroke="#222" stroke-width="1.1"/>
<path d="M1758.3 983.700V988.400" stroke="#222" stroke-width="1.5"/>
<path d="M1769.0 983.700V988.400" stroke="#222" stroke-width="1.1"/>
<path d="M1779.7 983.700V988.400" stroke="#222" stroke-width="1.5"/>
<path d="M1790.4 983.700V988.400" stroke="#222" stroke-width="1.1"/>
<path d="M1801.1 983.700V988.400" stroke="#222" stroke-width="1.5"/>
<path d="M1811.8 983.700V988.400" stroke="#222" stroke-width="1.1"/>
<path d="M1822.5 983.700V988.400" stroke="#222" stroke-width="1.5"/>
<path d="M1833.2 983.700V988.400" stroke="#222" stroke-width="1.1"/>
<rect x="1620" y="990" width="215" height="3" rx="1.500" fill="#c9c9c9"/>
<rect x="1617" y="988.400" width="4" height="7" rx="1" fill="#0a78d0"/>
<rect x="1769.300" y="955.300" width="62.500" height="29" fill="#868686" opacity=".88"/>
<rect x="1777.800" y="964.500" width="4.700" height="13" fill="#ababab"/><rect x="1786.300" y="964.500" width="5" height="13" fill="#ababab"/>
<rect x="1806.700" y="965" width="17.500" height="12.500" stroke="#a4a4a4" stroke-width="1.200"/><circle cx="1815.500" cy="970" r="2.500" fill="#a4a4a4"/><path d="M1810 977.500Q1810 973 1815.500 973Q1821 973 1821 977.500Z" fill="#a4a4a4"/>
</svg>
<!--RIGHTCONTENT-->
</div>
</body>
</html>
